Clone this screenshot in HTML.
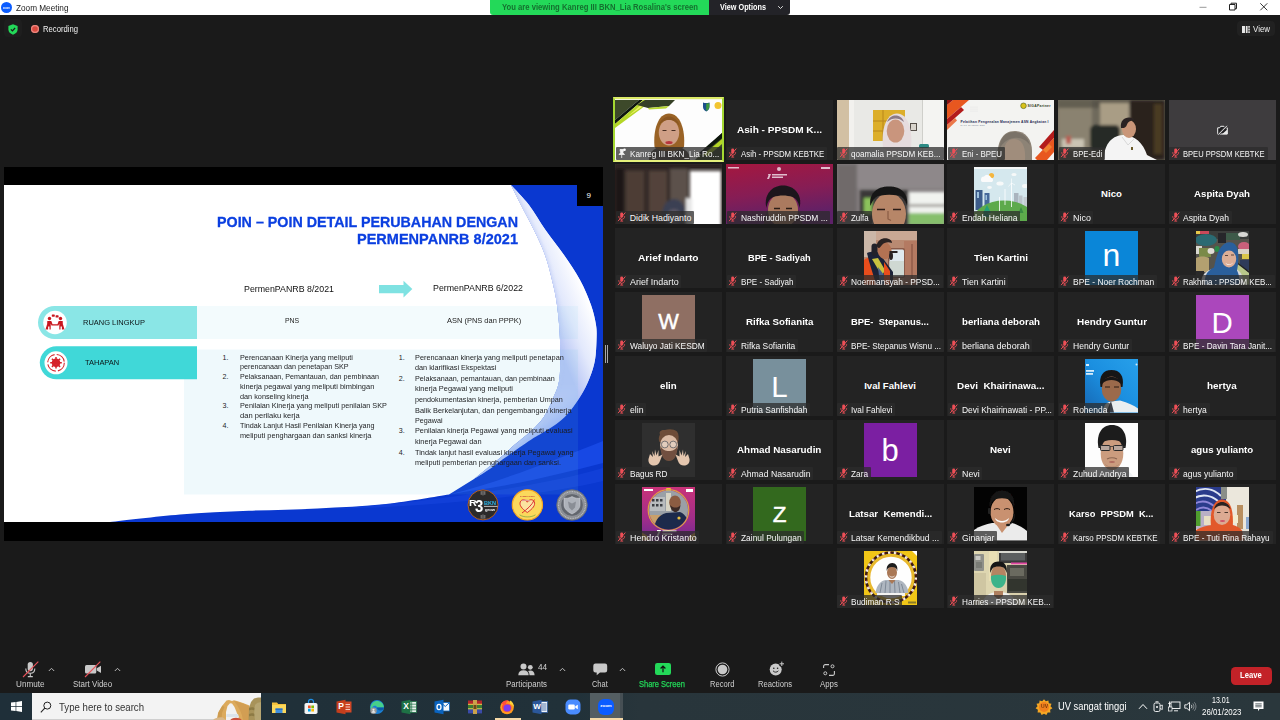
<!DOCTYPE html>
<html lang="id"><head><meta charset="utf-8"><title>Zoom Meeting</title>
<style>
html,body{margin:0;padding:0}
body{width:1280px;height:720px;overflow:hidden;background:#1a1a1a;position:relative;font-family:"Liberation Sans",sans-serif;color:#fff}
.t{position:absolute;white-space:pre;display:block;transform-origin:0 50%}
.a{position:absolute}
.tile{position:absolute;width:107px;height:59.6px;background:#232323;overflow:hidden}
.lb{position:absolute;left:.5px;top:46.4px;height:13.2px;background:rgba(43,43,43,.74);border-radius:1px}
.av{position:absolute;left:27px;top:3px;width:53px;height:53.5px;overflow:hidden}
svg{position:absolute;display:block;overflow:visible}
</style></head><body>
<div class="a" style="left:0;top:0;width:1280px;height:15px;background:#fff"></div><div class="a" style="left:1px;top:2px;width:11px;height:11px;border-radius:50%;background:#0b5cff"></div><span class="t" style="left:3.2px;top:5.6px;font-size:3.2px;line-height:4px;color:#fff;font-weight:700;transform:scaleX(0.817);">zoom</span><span class="t" style="left:15.5px;top:1.5px;font-size:9.4px;line-height:12px;color:#222;transform:scaleX(0.876);">Zoom Meeting</span><svg style="left:1196px;top:0" width="80" height="15" viewBox="0 0 80 15"><path d="M3.5 7.3h7" stroke="#999" stroke-width="1"/><path d="M33.5 4.5h5.5v5.5h-5.5z M35 4.5v-1.3h5.5v5.5h-1.5" fill="none" stroke="#222" stroke-width="1"/><path d="M64.3 3.3l7 7M71.3 3.3l-7 7" stroke="#222" stroke-width="0.9"/></svg><div class="a" style="left:490px;top:0;width:219px;height:14.5px;background:#23d959;border-radius:0 0 0 3px"></div><div class="a" style="left:709px;top:0;width:81px;height:14.5px;background:#232328;border-radius:0 0 3px 0"></div><span class="t" style="left:502.0px;top:1.9px;font-size:8.6px;line-height:11px;color:#15702f;font-weight:700;transform:scaleX(0.892);">You are viewing Kanreg III BKN_Lia Rosalina&#x27;s screen</span><span class="t" style="left:720.0px;top:1.9px;font-size:8.6px;line-height:11px;color:#fff;font-weight:700;transform:scaleX(0.847);">View Options</span><svg style="left:777px;top:5px" width="7" height="5" viewBox="0 0 7 5"><path d="M1.2 1.2l2.3 2.3 2.3-2.3" fill="none" stroke="#ddd" stroke-width="1"/></svg><div class="a" style="left:4px;top:19px;width:18px;height:18px;border-radius:4px;background:#1e1e1e"></div><svg style="left:8.200px;top:23.600px" width="10" height="11" viewBox="0 0 10 11"><path d="M5 .3L9.6 1.9v3.6c0 2.5-1.900 4.300-4.600 5.200C2.300 9.800 .4 8 .4 5.500V1.900z" fill="#23d959"/><path d="M2.900 5.400l1.500 1.500 2.700-2.900" fill="none" stroke="#1a1a1a" stroke-width="1.200"/></svg><div class="a" style="left:30.5px;top:25px;width:8px;height:8px;border-radius:50%;background:#d9493f;box-shadow:inset 0 0 0 1.2px #e98a82"></div><span class="t" style="left:42.5px;top:23.5px;font-size:8.6px;line-height:11px;color:#f2f2f2;transform:scaleX(0.893);">Recording</span><div class="a" style="left:1237px;top:21px;width:38px;height:15px;border-radius:4px;background:#212121"></div><svg style="left:1242px;top:25.500px" width="8" height="7" viewBox="0 0 8 7"><path d="M0 0h3v7h-3zM3.8 0h1.800v7h-1.800zM6.300 0h1.500v1.800h-1.500zM6.300 2.600h1.500v1.800h-1.500zM6.300 5.200h1.500v1.800h-1.500z" fill="#e6e6e6"/></svg><span class="t" style="left:1253.0px;top:23.5px;font-size:8.6px;line-height:11px;color:#eee;transform:scaleX(0.920);">View</span><div class="a" style="left:4px;top:167px;width:599px;height:374px;background:#000"></div><div class="a" style="left:4px;top:185px;width:599px;height:337px;background:#fff;overflow:hidden"><svg style="left:0;top:0" width="599" height="337" viewBox="4 185 599 337">
<defs>
<linearGradient id="cg" gradientUnits="userSpaceOnUse" x1="548" y1="320" x2="597" y2="300"><stop offset="0" stop-color="#b7c5f5"/><stop offset=".4" stop-color="#e3e9fc"/><stop offset=".85" stop-color="#ffffff"/></linearGradient>
<linearGradient id="cg2" gradientUnits="userSpaceOnUse" x1="516" y1="432" x2="546" y2="470"><stop offset="0" stop-color="#c9d6fa"/><stop offset=".55" stop-color="#8ea9f3"/><stop offset="1" stop-color="#3e66e8"/></linearGradient>
<linearGradient id="fade" gradientUnits="userSpaceOnUse" x1="0" y1="385" x2="0" y2="435"><stop offset="0" stop-color="#fff" stop-opacity="1"/><stop offset="1" stop-color="#fff" stop-opacity="0"/></linearGradient>
<mask id="mk" maskUnits="userSpaceOnUse" x="0" y="180" width="610" height="345"><rect x="0" y="180" width="610" height="345" fill="url(#fade)"/></mask>
<clipPath id="crc"><path d="M511.0 185.0C514.0 188.3 523.2 197.5 529.0 205.0C534.8 212.5 539.7 221.7 545.5 230.0C551.3 238.3 558.2 246.7 564.0 255.0C569.8 263.3 575.5 271.7 580.0 280.0C584.5 288.3 588.3 297.5 591.0 305.0C593.7 312.5 595.1 319.2 596.0 325.0C596.9 330.8 596.7 334.2 596.5 340.0C596.3 345.8 596.1 353.7 595.0 360.0C593.9 366.3 592.1 371.8 589.6 378.0C587.1 384.2 584.1 390.6 580.0 397.0C575.9 403.4 570.4 411.2 565.0 416.7C559.6 422.2 553.3 426.0 547.6 429.8C541.9 433.6 538.1 435.1 531.0 439.7C523.9 444.3 511.5 453.1 505.0 457.7C498.5 462.3 497.2 463.9 492.0 467.5C486.8 471.1 477.0 477.1 474.0 479.0C478.1 475.7 491.6 465.0 498.4 459.3C505.2 453.6 509.4 449.3 514.8 444.6C520.2 439.9 526.1 435.6 531.0 431.0C535.9 426.4 540.2 422.4 544.0 416.7C547.8 411.0 551.0 403.4 553.6 397.0C556.2 390.6 558.4 387.5 559.5 378.0C560.6 368.5 560.4 352.2 560.0 340.0C559.6 327.8 558.3 315.0 557.0 305.0C555.7 295.0 554.0 288.3 552.0 280.0C550.0 271.7 548.0 263.3 545.0 255.0C542.0 246.7 538.0 238.3 534.0 230.0C530.0 221.7 524.8 212.5 521.0 205.0C517.2 197.5 512.7 188.3 511.0 185.0Z"/></clipPath>
</defs>
<!-- deep blue base -->
<path d="M511.0 185.0C512.7 188.3 517.2 197.5 521.0 205.0C524.8 212.5 530.0 221.7 534.0 230.0C538.0 238.3 542.0 246.7 545.0 255.0C548.0 263.3 550.0 271.7 552.0 280.0C554.0 288.3 555.7 295.0 557.0 305.0C558.3 315.0 559.6 327.8 560.0 340.0C560.4 352.2 560.6 368.5 559.5 378.0C558.4 387.5 556.2 390.6 553.6 397.0C551.0 403.4 547.8 411.0 544.0 416.7C540.2 422.4 535.9 426.4 531.0 431.0C526.1 435.6 520.2 439.9 514.8 444.6C509.4 449.3 505.2 453.6 498.4 459.3C491.6 465.0 478.1 475.7 474.0 479.0L449.0 494.6C438.5 496.2 407.9 501.7 386.0 504.0C364.1 506.3 340.4 507.3 317.5 508.4C294.6 509.5 271.6 509.8 248.7 510.8C225.8 511.8 203.1 512.6 180.0 514.5C156.9 516.4 121.7 520.8 110.0 522.0L603 522L603 185Z" fill="#0a38d0"/>
<!-- medium blue bands -->
<path d="M449 494.6 C500 482 560 458 603 441 L603 463 C560 474 520 484 470 491 Z" fill="#1748e4"/>
<path d="M330 509 C420 503 540 487 603 468 L603 481 C540 496 430 507 330 509 Z" fill="#1443dc" opacity=".7"/>
<!-- crescent: lower lens layer then upper white layer fading out -->
<path d="M511.0 185.0C514.0 188.3 523.2 197.5 529.0 205.0C534.8 212.5 539.7 221.7 545.5 230.0C551.3 238.3 558.2 246.7 564.0 255.0C569.8 263.3 575.5 271.7 580.0 280.0C584.5 288.3 588.3 297.5 591.0 305.0C593.7 312.5 595.1 319.2 596.0 325.0C596.9 330.8 596.7 334.2 596.5 340.0C596.3 345.8 596.1 353.7 595.0 360.0C593.9 366.3 592.1 371.8 589.6 378.0C587.1 384.2 584.1 390.6 580.0 397.0C575.9 403.4 570.4 411.2 565.0 416.7C559.6 422.2 553.3 426.0 547.6 429.8C541.9 433.6 538.1 435.1 531.0 439.7C523.9 444.3 511.5 453.1 505.0 457.7C498.5 462.3 497.2 463.9 492.0 467.5C486.8 471.1 477.0 477.1 474.0 479.0C478.1 475.7 491.6 465.0 498.4 459.3C505.2 453.6 509.4 449.3 514.8 444.6C520.2 439.9 526.1 435.6 531.0 431.0C535.9 426.4 540.2 422.4 544.0 416.7C547.8 411.0 551.0 403.4 553.6 397.0C556.2 390.6 558.4 387.5 559.5 378.0C560.6 368.5 560.4 352.2 560.0 340.0C559.6 327.8 558.3 315.0 557.0 305.0C555.7 295.0 554.0 288.3 552.0 280.0C550.0 271.7 548.0 263.3 545.0 255.0C542.0 246.7 538.0 238.3 534.0 230.0C530.0 221.7 524.8 212.5 521.0 205.0C517.2 197.5 512.7 188.3 511.0 185.0Z" fill="url(#cg2)"/>
<g mask="url(#mk)"><path d="M511.0 185.0C514.0 188.3 523.2 197.5 529.0 205.0C534.8 212.5 539.7 221.7 545.5 230.0C551.3 238.3 558.2 246.7 564.0 255.0C569.8 263.3 575.5 271.7 580.0 280.0C584.5 288.3 588.3 297.5 591.0 305.0C593.7 312.5 595.1 319.2 596.0 325.0C596.9 330.8 596.7 334.2 596.5 340.0C596.3 345.8 596.1 353.7 595.0 360.0C593.9 366.3 592.1 371.8 589.6 378.0C587.1 384.2 584.1 390.6 580.0 397.0C575.9 403.4 570.4 411.2 565.0 416.7C559.6 422.2 553.3 426.0 547.6 429.8C541.9 433.6 538.1 435.1 531.0 439.7C523.9 444.3 511.5 453.1 505.0 457.7C498.5 462.3 497.2 463.9 492.0 467.5C486.8 471.1 477.0 477.1 474.0 479.0C478.1 475.7 491.6 465.0 498.4 459.3C505.2 453.6 509.4 449.3 514.8 444.6C520.2 439.9 526.1 435.6 531.0 431.0C535.9 426.4 540.2 422.4 544.0 416.7C547.8 411.0 551.0 403.4 553.6 397.0C556.2 390.6 558.4 387.5 559.5 378.0C560.6 368.5 560.4 352.2 560.0 340.0C559.6 327.8 558.3 315.0 557.0 305.0C555.7 295.0 554.0 288.3 552.0 280.0C550.0 271.7 548.0 263.3 545.0 255.0C542.0 246.7 538.0 238.3 534.0 230.0C530.0 221.7 524.8 212.5 521.0 205.0C517.2 197.5 512.7 188.3 511.0 185.0Z" fill="url(#cg)"/></g>
<path d="M511.0 185.0C512.7 188.3 517.2 197.5 521.0 205.0C524.8 212.5 530.0 221.7 534.0 230.0C538.0 238.3 542.0 246.7 545.0 255.0C548.0 263.3 550.0 271.7 552.0 280.0C554.0 288.3 555.7 295.0 557.0 305.0C558.3 315.0 559.6 327.8 560.0 340.0C560.4 352.2 560.6 368.5 559.5 378.0C558.4 387.5 556.2 390.6 553.6 397.0C551.0 403.4 547.8 411.0 544.0 416.7C540.2 422.4 535.9 426.4 531.0 431.0C526.1 435.6 520.2 439.9 514.8 444.6C509.4 449.3 505.2 453.6 498.4 459.3C491.6 465.0 478.1 475.7 474.0 479.0" fill="none" stroke="#b9c7f5" stroke-width="3" opacity=".55" filter="url(#b2)" clip-path="url(#crc)"/>
</svg><svg style="left:0;top:0" width="599" height="337" viewBox="4 185 599 337">
<!-- table backgrounds -->
<rect x="197" y="306" width="381" height="33" fill="rgb(100,200,230)" fill-opacity=".075"/>
<rect x="184" y="349.500" width="394" height="145" fill="rgb(100,200,230)" fill-opacity=".105"/>
<!-- pills -->
<path d="M197 306H54.500a16.500 16.500 0 0 0 0 33H197z" fill="#8ae6e6"/>
<path d="M197 346.300H56.300a16.500 16.500 0 0 0 0 33H197z" fill="#40d8d8"/>
<circle cx="55" cy="322.500" r="11.800" fill="#fff"/>
<circle cx="56" cy="362.800" r="11.500" fill="#fff"/>
<!-- icon 1: meeting -->
<g fill="#c8161d"><circle cx="49.500" cy="318.500" r="1.700"/><circle cx="60.500" cy="318.500" r="1.700"/><path d="M47.300 321h4l1.200 3.300h2.500v1.300h-3.500l-.8-2v6h-1.200v-3h-1.400v3h-1.200z"/><path d="M62.700 321h-4l-1.200 3.300h-2.500v1.300h3.500l.8-2v6h1.200v-3h1.400v3h1.200z"/><rect x="51.800" y="314.500" width="3" height="2.200" rx=".6"/><rect x="55.600" y="315.300" width="3" height="2.200" rx=".6"/><path d="M45.500 329.600l1.500-5h1.200l-1.500 5zM64.500 329.600l-1.500-5h-1.200l1.500 5z"/></g>
<!-- icon 2: cycle gear -->
<g fill="none" stroke="#d5222a"><circle cx="56" cy="362.800" r="8.300" stroke-width="1.100" stroke-dasharray="11 2.200"/><circle cx="56" cy="362.800" r="3.100" stroke-width="2.400"/><path d="M56 357v11.600M50.200 362.800h11.600M51.900 358.700l8.200 8.200M60.100 358.700l-8.200 8.200" stroke-width="1.500"/></g>
<!-- arrow -->
<path d="M379 285h24.500v-4.300l8.800 8.400-8.800 8.400v-4.300H379z" fill="#7fe2e2"/>
<!-- page number box -->
<rect x="577" y="185" width="26" height="21" fill="#000"/>
<!-- logos -->
<circle cx="483" cy="504.900" r="15" fill="#2b2a2a" stroke="#c0651f" stroke-width=".9"/>
<path d="M484 506.400h13.500" stroke="#fff" stroke-width=".7"/>
<path d="M481.200 491.200v3.600M483 491v4.400M484.800 491.200v3.600M481.200 515v3.600M483 514.500v4.400M484.800 515v3.600" stroke="#c9c9c9" stroke-width=".6"/>
<circle cx="527.400" cy="504.900" r="15.100" fill="#fbd85c" stroke="#f5a623" stroke-width="1.200"/>
<path d="M527.300 512.500c-5.500-3.800-8.300-7.300-7-10.600 1.300-3 5.300-2.900 7 .3 1.700-3.200 5.700-3.300 7-.3 1.300 3.300-1.500 6.800-7 10.600z" fill="#fbe3a0" stroke="#d8232a" stroke-width=".9"/>
<path d="M534.500 499.500c-2.500 6-8 10-12.500 13.500" stroke="#d8232a" stroke-width=".9" fill="none"/>
<path d="M522 500.800c2-.8 5-.8 8 0" stroke="#e39a9a" stroke-width="1.200" fill="none"/>
<path d="M519.500 514.800c4 2.800 12 2.800 16 0" stroke="#5a9a3a" stroke-width=".6" fill="none"/>
<circle cx="572" cy="505" r="15.300" fill="#8b8e94" stroke="#6a6d74" stroke-width=".8"/>
<circle cx="572" cy="505" r="13.400" fill="none" stroke="#d5d7db" stroke-width="1.100" stroke-dasharray=".9 .8" opacity=".7"/>
<circle cx="572" cy="505" r="11.300" fill="#62666e" stroke="#a9acb2" stroke-width=".5"/>
<path d="M564 498c2.600.7 5.300.2 8-1.500 2.700 1.700 5.400 2.200 8 1.500v6.500c0 4.300-3.300 7.200-8 9.500-4.700-2.300-8-5.200-8-9.500z" fill="#aeb2ba" stroke="#d9dbe0" stroke-width=".5"/>
<path d="M568 501.500l4 2 4-2-1 6-3 3-3-3z" fill="#8a8e96"/>
</svg></div><span class="t" style="left:217.0px;top:212.3px;font-size:15px;line-height:20px;color:#0b3fe0;font-weight:700;transform:scaleX(0.952);-webkit-text-stroke:.3px #0b3fe0;">POIN – POIN DETAIL PERUBAHAN DENGAN</span><span class="t" style="left:357.0px;top:228.6px;font-size:15px;line-height:20px;color:#0b3fe0;font-weight:700;transform:scaleX(0.967);-webkit-text-stroke:.3px #0b3fe0;">PERMENPANRB 8/2021</span><span class="t" style="left:586.6px;top:191.0px;font-size:8px;line-height:10px;color:#fff;">9</span><span class="t" style="left:243.5px;top:283.3px;font-size:9px;line-height:12px;color:#111;transform:scaleX(0.979);">PermenPANRB 8/2021</span><span class="t" style="left:432.5px;top:282.3px;font-size:9px;line-height:12px;color:#111;transform:scaleX(0.979);">PermenPANRB 6/2022</span><span class="t" style="left:83.4px;top:317.5px;font-size:7.4px;line-height:10px;color:#0c1416;transform:scaleX(1.011);">RUANG LINGKUP</span><span class="t" style="left:85.0px;top:357.8px;font-size:7.4px;line-height:10px;color:#0c1416;transform:scaleX(1.011);">TAHAPAN</span><span class="t" style="left:285.3px;top:315.9px;font-size:7.4px;line-height:10px;color:#222;transform:scaleX(0.934);">PNS</span><span class="t" style="left:447.0px;top:316.2px;font-size:7.4px;line-height:10px;color:#222;transform:scaleX(1.010);">ASN (PNS dan PPPK)</span><span class="t" style="left:239.7px;top:353.6px;font-size:7.1px;line-height:9px;color:#1c1d1f;transform:scaleX(1.026);">Perencanaan Kinerja yang meliputi</span><span class="t" style="left:222.6px;top:353.6px;font-size:7.1px;line-height:9px;color:#1c1d1f;">1.</span><span class="t" style="left:239.7px;top:363.4px;font-size:7.1px;line-height:9px;color:#1c1d1f;transform:scaleX(1.016);">perencanaan dan penetapan SKP</span><span class="t" style="left:239.7px;top:373.2px;font-size:7.1px;line-height:9px;color:#1c1d1f;transform:scaleX(1.006);">Pelaksanaan, Pemantauan, dan pembinaan</span><span class="t" style="left:222.6px;top:373.2px;font-size:7.1px;line-height:9px;color:#1c1d1f;">2.</span><span class="t" style="left:239.7px;top:383.1px;font-size:7.1px;line-height:9px;color:#1c1d1f;transform:scaleX(1.051);">kinerja pegawai yang meliputi bimbingan</span><span class="t" style="left:239.7px;top:392.7px;font-size:7.1px;line-height:9px;color:#1c1d1f;transform:scaleX(1.028);">dan konseling kinerja</span><span class="t" style="left:239.7px;top:402.3px;font-size:7.1px;line-height:9px;color:#1c1d1f;transform:scaleX(1.023);">Penilaian Kinerja yang meliputi penilaian SKP</span><span class="t" style="left:222.6px;top:402.3px;font-size:7.1px;line-height:9px;color:#1c1d1f;">3.</span><span class="t" style="left:239.7px;top:412.0px;font-size:7.1px;line-height:9px;color:#1c1d1f;transform:scaleX(1.066);">dan perilaku kerja</span><span class="t" style="left:239.7px;top:421.7px;font-size:7.1px;line-height:9px;color:#1c1d1f;transform:scaleX(1.015);">Tindak Lanjut Hasil Penilaian Kinerja yang</span><span class="t" style="left:222.6px;top:421.7px;font-size:7.1px;line-height:9px;color:#1c1d1f;">4.</span><span class="t" style="left:239.7px;top:431.5px;font-size:7.1px;line-height:9px;color:#1c1d1f;transform:scaleX(1.034);">meliputi penghargaan dan sanksi kinerja</span><span class="t" style="left:415.3px;top:353.6px;font-size:7.1px;line-height:9px;color:#1c1d1f;transform:scaleX(1.031);">Perencanaan kinerja yang meliputi penetapan</span><span class="t" style="left:398.8px;top:353.6px;font-size:7.1px;line-height:9px;color:#1c1d1f;">1.</span><span class="t" style="left:415.3px;top:364.3px;font-size:7.1px;line-height:9px;color:#1c1d1f;transform:scaleX(1.026);">dan klarifikasi Ekspektasi</span><span class="t" style="left:415.3px;top:374.6px;font-size:7.1px;line-height:9px;color:#1c1d1f;transform:scaleX(1.018);">Pelaksanaan, pemantauan, dan pembinaan</span><span class="t" style="left:398.8px;top:374.6px;font-size:7.1px;line-height:9px;color:#1c1d1f;">2.</span><span class="t" style="left:415.3px;top:385.3px;font-size:7.1px;line-height:9px;color:#1c1d1f;transform:scaleX(1.043);">kinerja Pegawai yang meliputi</span><span class="t" style="left:415.3px;top:396.0px;font-size:7.1px;line-height:9px;color:#1c1d1f;transform:scaleX(1.019);">pendokumentasian kinerja, pemberian Umpan</span><span class="t" style="left:415.3px;top:406.7px;font-size:7.1px;line-height:9px;color:#1c1d1f;transform:scaleX(1.039);">Balik Berkelanjutan, dan pengembangan kinerja</span><span class="t" style="left:415.3px;top:417.0px;font-size:7.1px;line-height:9px;color:#1c1d1f;transform:scaleX(1.014);">Pegawai</span><span class="t" style="left:415.3px;top:427.1px;font-size:7.1px;line-height:9px;color:#1c1d1f;transform:scaleX(1.030);">Penilaian kinerja Pegawai yang meliputi evaluasi</span><span class="t" style="left:398.8px;top:427.1px;font-size:7.1px;line-height:9px;color:#1c1d1f;">3.</span><span class="t" style="left:415.3px;top:437.8px;font-size:7.1px;line-height:9px;color:#1c1d1f;transform:scaleX(1.041);">kinerja Pegawai dan</span><span class="t" style="left:415.3px;top:448.5px;font-size:7.1px;line-height:9px;color:#1c1d1f;transform:scaleX(1.030);">Tindak lanjut hasil evaluasi kinerja Pegawai yang</span><span class="t" style="left:398.8px;top:448.5px;font-size:7.1px;line-height:9px;color:#1c1d1f;">4.</span><span class="t" style="left:415.3px;top:459.2px;font-size:7.1px;line-height:9px;color:#1c1d1f;transform:scaleX(1.031);">meliputi pemberian penghargaan dan sanksi.</span><span class="t" style="left:468.9px;top:497.9px;font-size:8.6px;line-height:11px;color:#fff;font-weight:700;transform:scaleX(1.250);">R</span><span class="t" style="left:475.3px;top:494.7px;font-size:17.4px;line-height:23px;color:#fff;font-weight:700;transform:scaleX(0.858);">3</span><span class="t" style="left:484.0px;top:498.6px;font-size:6.1px;line-height:8px;color:#2bb5e8;font-weight:700;transform:scaleX(0.909);">BKN</span><span class="t" style="left:485.2px;top:507.2px;font-size:4px;line-height:5px;color:#fff;font-weight:700;transform:scaleX(1.056);">grow</span><span class="t" style="left:520.0px;top:495.2px;font-size:1.9px;line-height:2px;color:#b33;font-weight:700;transform:scaleX(0.972);">KANREG III BKN</span><div class="a" style="left:604.800px;top:345px;width:1.200px;height:18px;background:#a9a9a9"></div><div class="a" style="left:606.800px;top:345px;width:1.200px;height:18px;background:#a9a9a9"></div><svg width="0" height="0" style="left:0;top:0"><defs><filter id="b1" x="-10%" y="-10%" width="120%" height="120%"><feGaussianBlur stdDeviation=".7"/></filter><filter id="b2" x="-20%" y="-20%" width="140%" height="140%"><feGaussianBlur stdDeviation="1.600"/></filter><filter id="b3" x="-30%" y="-30%" width="160%" height="160%"><feGaussianBlur stdDeviation="3"/></filter></defs></svg><div class="a" style="left:612.900px;top:97.200px;width:106.900px;height:60.400px;border:2.500px solid;background:#f4f6e0;border-color:#dcea68 #a4d832 #e6f07c #a4d832"></div><div class="tile" style="left:615px;top:100.3px;background:#fff;"><svg style="left:0;top:0" width="107" height="60" viewBox="0 0 107 60"><rect width="107" height="60" fill="#fdfdfd"/>
<g filter="url(#b1)">
<path d="M0 0H24L0 20z" fill="#3d4a2a"/><path d="M24 0h4L0 24v-4z" fill="#10140c"/><path d="M28 0h10L0 28v-4z" fill="#b4d628"/><path d="M30 1.500L37 0 12 17z" fill="#eef06a"/>
<path d="M22 5L30 0H60L54 6 33 8z" fill="#343f26"/><path d="M33 8l21-2-3 2.500-17 1z" fill="#b8d830"/>
<path d="M107 33L80 60h27z" fill="#3d4a2a"/><path d="M107 33L84 53l3 1.500L107 38z" fill="#10140c"/><path d="M107 39L88 55l5 1L107 44z" fill="#b4d628"/>
<path d="M34 60c0-9 6-14 20-14s21 5 21 14z" fill="#5c524a"/>
<path d="M39.500 47C38 30 43 13.500 54 13.500S70.500 29 69 47c-3 3-9 4-15 4s-12-1-14.500-4z" fill="#9a6426"/>
<ellipse cx="54" cy="32.500" rx="10.200" ry="13" fill="#cf9f86"/>
<path d="M43.500 26c2-7 7-9.500 10.500-9.500s9 2.500 10.500 9.500c-3-4.500-6.500-6-10.500-6s-7.500 1.500-10.500 6z" fill="#8a5620"/>
<ellipse cx="54" cy="42.500" rx="3.600" ry="1.500" fill="#b8353c"/>
<path d="M47.500 30.500h4M56.500 30.500h4" stroke="#4a2e22" stroke-width="1"/>
</g>
<path d="M88 2.500c2 .8 4 .8 6.500 0v4.500c0 2.200-1.600 3.600-3.200 4.500C89.600 10.600 88 9.200 88 7z" fill="#1d4f8c"/><path d="M91.200 3.500v7.500c1.600-.9 3.200-2.300 3.200-4.500V3c-1 .4-2.100.5-3.200.5z" fill="#3c9a3c"/>
<circle cx="103" cy="5.500" r="3.500" fill="#f2c531"/></svg><div class="lb" style="width:106.3px"><svg style="left:1.5px;top:1.2px" width="10" height="11" viewBox="0 0 10 11"><path d="M3 1.500h3.500l-.6 3.200 1.600 1.800H2l1.600-1.800zM4.700 6.500v3.500" fill="#f2f2f2" stroke="#f2f2f2" stroke-width=".8"/><circle cx="7.500" cy="1.800" r="1.300" fill="#fff"/></svg></div></div><span class="t" style="left:629.7px;top:148.5px;font-size:8.8px;line-height:11px;color:#f6f6f6;transform:scaleX(0.927);">Kanreg III BKN_Lia Ro...</span><div class="tile" style="left:726px;top:100.3px;"><div class="lb" style="width:100.3px"><svg style="left:1.5px;top:1.8px" width="9.400" height="9.800" viewBox="0 0 9 10"><rect x="3" y=".6" width="3" height="5.2" rx="1.500" fill="#ee4f57"/><path d="M1.500 4.300c0 2 1.300 3.100 3 3.100s3-1.100 3-3.100M4.500 7.400v1.800M3 9.300h3" fill="none" stroke="#ee4f57" stroke-width=".9"/><path d="M.8 9.300L8.200 .6" stroke="#ee4f57" stroke-width="1"/></svg></div></div><span class="t" style="left:740.7px;top:148.5px;font-size:8.8px;line-height:11px;color:#f6f6f6;transform:scaleX(0.892);">Asih - PPSDM KEBTKE</span><span class="t" style="left:737.0px;top:124.4px;font-size:9.6px;line-height:12px;color:#fff;font-weight:700;transform:scaleX(1.049);">Asih - PPSDM K...</span><div class="tile" style="left:836.6px;top:100.3px;"><svg style="left:0;top:0" width="107" height="60" viewBox="0 0 107 60"><rect width="107" height="60" fill="#e9e9e6"/>
<g filter="url(#b1)">
<rect width="12" height="60" fill="#d2c0a3"/><rect x="12" width="5" height="60" fill="#f2f1ee"/>
<rect x="86" width="21" height="60" fill="#f4f4f2"/><rect x="85" width="1" height="60" fill="#cfcfcb"/>
<rect x="36" y="10" width="32" height="31" fill="#dcae2c"/><path d="M46 10v31M36 21h32M36 31h10" stroke="#b8861c" stroke-width="1"/>
<rect x="73" y="23" width="7" height="8" fill="#55504a"/><rect x="74" y="24" width="5" height="6" fill="#d8d4cc"/>
<path d="M38 60c1-9 7-13 21-13s20 5 22 13z" fill="#efecec"/>
<path d="M46 48C44 30 49 13.500 60 13.500S76 30 74 48c-4 3-9 4-14 4s-10-1-14-4z" fill="#e6dcde"/>
<ellipse cx="58.500" cy="31" rx="8.800" ry="11.500" fill="#c9957d"/>
<path d="M50 22c2-5 5.500-6.500 8.500-6.500s7 1.500 8.500 6.500c-3-2.500-5.500-3.500-8.500-3.500s-5.500 1-8.500 3.500z" fill="#8c7a86"/>
<rect x="82" y="44" width="10" height="4" rx="1.500" fill="#2f8c86"/>
</g></svg><div class="lb" style="width:106.5px"><svg style="left:1.5px;top:1.8px" width="9.400" height="9.800" viewBox="0 0 9 10"><rect x="3" y=".6" width="3" height="5.2" rx="1.500" fill="#ee4f57"/><path d="M1.500 4.300c0 2 1.300 3.100 3 3.100s3-1.100 3-3.100M4.500 7.400v1.800M3 9.300h3" fill="none" stroke="#ee4f57" stroke-width=".9"/><path d="M.8 9.300L8.200 .6" stroke="#ee4f57" stroke-width="1"/></svg></div></div><span class="t" style="left:851.3px;top:148.5px;font-size:8.8px;line-height:11px;color:#f6f6f6;transform:scaleX(0.924);">qoamalia PPSDM KEB...</span><div class="tile" style="left:947px;top:100.3px;"><svg style="left:0;top:0" width="107" height="60" viewBox="0 0 107 60"><rect width="107" height="60" fill="#f3f3f1"/>
<path d="M6 0h16L0 19V5z" fill="#e8571f"/><path d="M0 0h6L0 5z" fill="#8c1414"/><path d="M0 19L14 7l3 3L0 25z" fill="#b31b1b"/><path d="M0 25l8-7 2 2.500L0 30z" fill="#e8571f" opacity=".8"/>
<path d="M107 29L83 60h24z" fill="#f3f3f1"/><path d="M107 30L92 47l4 3 11-12z" fill="#b31b1b"/><path d="M107 38L88 58l2 2h10l7-8z" fill="#e8571f"/><path d="M96 50l6-6 3 3-6 6z" fill="#f08030"/>
<g fill="#cfcfd2"><circle cx="24" cy="7" r=".4"/><circle cx="26" cy="7" r=".4"/><circle cx="28" cy="7" r=".4"/><circle cx="30" cy="7" r=".4"/><circle cx="24" cy="9" r=".4"/><circle cx="26" cy="9" r=".4"/><circle cx="28" cy="9" r=".4"/><circle cx="30" cy="9" r=".4"/><circle cx="24" cy="11" r=".4"/><circle cx="26" cy="11" r=".4"/><circle cx="28" cy="11" r=".4"/><circle cx="30" cy="11" r=".4"/></g>
<circle cx="76.500" cy="5.800" r="2.800" fill="#d9c21a" stroke="#4a5a1a" stroke-width=".6"/>
<text x="80.500" y="7" font-family="Liberation Sans, sans-serif" font-size="3.400" font-weight="700" fill="#2d3a1a" textLength="23">SIGAPartner</text>
<text x="13.500" y="22.500" font-family="Liberation Sans, sans-serif" font-size="3.300" font-weight="700" fill="#1c2752" textLength="88">Pelatihan Pengenalan Manajemen ASN Angkatan I</text>
<text x="13.500" y="26.300" font-family="Liberation Sans, sans-serif" font-size="1.800" fill="#6a7088" textLength="24">24 s.d. 26 Januari 2023</text>
<g filter="url(#b1)"><path d="M50 60c0-16 4-29 18-29 11 0 17 9 17 20v9z" fill="#8d8376"/><path d="M57 60c-2-12 2-21 10-21s12 8 11 21z" fill="#a08d7c"/><path d="M52 50c1-12 6-18 15-18 8 0 14 5 16 13-4-5-9-8-16-7-7 1-12 5-15 12z" fill="#7a7268"/></g></svg><div class="lb" style="width:57.0px"><svg style="left:1.5px;top:1.8px" width="9.400" height="9.800" viewBox="0 0 9 10"><rect x="3" y=".6" width="3" height="5.2" rx="1.500" fill="#ee4f57"/><path d="M1.500 4.300c0 2 1.300 3.100 3 3.100s3-1.100 3-3.100M4.500 7.400v1.800M3 9.300h3" fill="none" stroke="#ee4f57" stroke-width=".9"/><path d="M.8 9.300L8.200 .6" stroke="#ee4f57" stroke-width="1"/></svg></div></div><span class="t" style="left:961.7px;top:148.5px;font-size:8.8px;line-height:11px;color:#f6f6f6;transform:scaleX(0.899);">Eni - BPEU</span><div class="tile" style="left:1058px;top:100.3px;"><svg style="left:0;top:0" width="107" height="60" viewBox="0 0 107 60"><rect width="107" height="60" fill="#6f6a5c"/>
<g filter="url(#b2)">
<rect width="34" height="60" fill="#8a8270"/><rect x="0" y="0" width="107" height="8" fill="#4a463c" opacity=".6"/>
<rect x="42" y="3" width="29" height="40" fill="#a99d85"/>
<rect x="72" y="0" width="35" height="60" fill="#2b221a"/><rect x="96" y="4" width="8" height="50" fill="#4a3a24"/>
<rect x="32" y="25" width="30" height="26" rx="5" fill="#252a28"/>
<rect x="4" y="39" width="22" height="9" fill="#cbc4b4"/><rect x="8" y="36" width="5" height="8" fill="#b85a50"/>
<rect x="0" y="50" width="50" height="10" fill="#5c574c"/>
</g>
<g filter="url(#b1)">
<path d="M46 60c0-14 6-24 19-25 12 0 20 8 24 20l10 5z" fill="#f4f4f4"/>
<ellipse cx="71" cy="29" rx="7" ry="9" fill="#c99678"/>
<path d="M63 28c-1-7 3-10.500 8-10.500 3 0 5 1 6 3-4-.5-7 1-8 4-1 3-3 4-6 3.500z" fill="#2a2420"/>
<path d="M64 37l6 8 7-7" fill="none" stroke="#d8d8d8" stroke-width="1"/>
<rect x="73" y="47" width="2" height="3" fill="#6a5a2a"/>
</g></svg><div class="lb" style="width:46.3px"><svg style="left:1.5px;top:1.8px" width="9.400" height="9.800" viewBox="0 0 9 10"><rect x="3" y=".6" width="3" height="5.2" rx="1.500" fill="#ee4f57"/><path d="M1.500 4.300c0 2 1.300 3.100 3 3.100s3-1.100 3-3.100M4.500 7.400v1.800M3 9.300h3" fill="none" stroke="#ee4f57" stroke-width=".9"/><path d="M.8 9.300L8.200 .6" stroke="#ee4f57" stroke-width="1"/></svg></div></div><span class="t" style="left:1072.7px;top:148.5px;font-size:8.8px;line-height:11px;color:#f6f6f6;transform:scaleX(0.881);">BPE-Edi</span><div class="tile" style="left:1168.7px;top:100.3px;background:#3e3c3e;"><svg style="left:48px;top:25px" width="11" height="10" viewBox="0 0 11 10"><path d="M.7 2.800h2l1-1.500h3.200l1 1.500h2.400v6.200H.7z" fill="#1d1d1f" stroke="#f2f2f2" stroke-width="1"/><path d="M5 9.300h5.300V4.500z" fill="#e8e8e8"/><path d="M1.300 9.600L10 .8" stroke="#3e3c3e" stroke-width="2.200"/><path d="M1.300 9.600L10 .8" stroke="#f2f2f2" stroke-width=".9"/></svg><div class="lb" style="width:98.6px"><svg style="left:1.5px;top:1.8px" width="9.400" height="9.800" viewBox="0 0 9 10"><rect x="3" y=".6" width="3" height="5.2" rx="1.500" fill="#ee4f57"/><path d="M1.500 4.300c0 2 1.300 3.100 3 3.100s3-1.100 3-3.100M4.500 7.400v1.800M3 9.300h3" fill="none" stroke="#ee4f57" stroke-width=".9"/><path d="M.8 9.300L8.200 .6" stroke="#ee4f57" stroke-width="1"/></svg></div></div><span class="t" style="left:1183.4px;top:148.5px;font-size:8.8px;line-height:11px;color:#f6f6f6;transform:scaleX(0.860);">BPEU PPSDM KEBTKE</span><div class="tile" style="left:615px;top:164.3px;"><svg style="left:0;top:0" width="107" height="60" viewBox="0 0 107 60"><rect width="107" height="60" fill="#342a27"/>
<g filter="url(#b2)">
<rect x="0" width="9" height="60" fill="#1d1817"/>
<rect x="11" y="7" width="18" height="48" fill="#4d3d35"/><rect x="34" y="7" width="18" height="48" fill="#52433a"/>
<rect x="55" y="0" width="18" height="60" fill="#5c514c"/><rect x="0" y="0" width="107" height="5" fill="#2a2220"/>
<rect x="75" y="7" width="31" height="56" fill="#ffffff"/><rect x="71" y="34" width="6" height="28" fill="#e6e6e6"/>
<ellipse cx="59" cy="49" rx="11.500" ry="14" fill="#3a4152"/><ellipse cx="59" cy="54" rx="7.500" ry="9" fill="#5c5866"/>
</g></svg><div class="lb" style="width:78.6px"><svg style="left:1.5px;top:1.8px" width="9.400" height="9.800" viewBox="0 0 9 10"><rect x="3" y=".6" width="3" height="5.2" rx="1.500" fill="#ee4f57"/><path d="M1.500 4.300c0 2 1.300 3.100 3 3.100s3-1.100 3-3.100M4.500 7.400v1.800M3 9.300h3" fill="none" stroke="#ee4f57" stroke-width=".9"/><path d="M.8 9.300L8.200 .6" stroke="#ee4f57" stroke-width="1"/></svg></div></div><span class="t" style="left:629.7px;top:212.5px;font-size:8.8px;line-height:11px;color:#f6f6f6;">Didik Hadiyanto</span><div class="tile" style="left:726px;top:164.3px;"><svg style="left:0;top:0" width="107" height="60" viewBox="0 0 107 60"><defs><linearGradient id="ng" x1="0" y1="0" x2=".25" y2="1"><stop offset="0" stop-color="#a5173f"/><stop offset=".55" stop-color="#861d55"/><stop offset="1" stop-color="#5d2168"/></linearGradient></defs>
<rect width="107" height="60" fill="url(#ng)"/>
<g fill="#f3e6ee" opacity=".8"><rect x="2" y="3" width="11" height="1.500"/><rect x="95" y="3" width="9" height="2"/><circle cx="53" cy="5" r="2"/><path d="M42 10l3 0-2 5h-2l1.500-3.500z"/><rect x="46" y="10" width="15" height="1.500"/><rect x="46" y="12.500" width="11" height="1.500"/></g>
<g filter="url(#b1)">
<path d="M38 60c0-9 4-16 8-18h22c4 2 8 9 8 18z" fill="#4a2a3a"/>
<ellipse cx="57" cy="46" rx="15" ry="17" fill="#ab7a5e"/>
<path d="M40.500 44c-3-13 5-22.500 16.500-22.500S77 31 73.500 44c-1-7-4-10-7-11-6-2-13-2-19 0-3 1-6 4-7 11z" fill="#1b191c"/>
<path d="M48 44.500h6M60 44.500h6" stroke="#2a1c18" stroke-width="1.300"/>
</g></svg><div class="lb" style="width:103.7px"><svg style="left:1.5px;top:1.8px" width="9.400" height="9.800" viewBox="0 0 9 10"><rect x="3" y=".6" width="3" height="5.2" rx="1.500" fill="#ee4f57"/><path d="M1.500 4.300c0 2 1.300 3.100 3 3.100s3-1.100 3-3.100M4.500 7.400v1.800M3 9.300h3" fill="none" stroke="#ee4f57" stroke-width=".9"/><path d="M.8 9.300L8.200 .6" stroke="#ee4f57" stroke-width="1"/></svg></div></div><span class="t" style="left:740.7px;top:212.5px;font-size:8.8px;line-height:11px;color:#f6f6f6;transform:scaleX(0.959);">Nashiruddin PPSDM ...</span><div class="tile" style="left:836.6px;top:164.3px;"><svg style="left:0;top:0" width="107" height="60" viewBox="0 0 107 60"><rect width="107" height="60" fill="#868182"/>
<g filter="url(#b2)">
<rect width="107" height="24" fill="#8e888a"/><rect x="0" y="0" width="20" height="60" fill="#6f6b6b"/>
<rect x="72" y="28" width="36" height="21" fill="#f1f3ef"/><rect x="72" y="49" width="36" height="12" fill="#86bf6c"/><rect x="66" y="40" width="42" height="3" fill="#a8a6a2"/>
<rect x="23" y="26" width="48" height="36" fill="#3b3837"/>
<rect x="27" y="34" width="8" height="16" fill="#8cc25c"/>
</g>
<g filter="url(#b1)">
<ellipse cx="52" cy="50" rx="17" ry="21" fill="#b78668"/>
<path d="M33.500 42c-2-12 6-19.500 18.500-19.500S72 30 70 42c-2-7-5-10-9-10.500-6-1-12-1-17 0-5 .5-8 3.500-10.500 10.500z" fill="#191717"/>
<path d="M40 45.500h8M56 45.500h8" stroke="#2a1c18" stroke-width="1.400"/>
<path d="M51 47v8l3 1.500" stroke="#8a5c44" stroke-width="1.200" fill="none"/>
</g></svg><div class="lb" style="width:34.7px"><svg style="left:1.5px;top:1.8px" width="9.400" height="9.800" viewBox="0 0 9 10"><rect x="3" y=".6" width="3" height="5.2" rx="1.500" fill="#ee4f57"/><path d="M1.500 4.300c0 2 1.300 3.100 3 3.100s3-1.100 3-3.100M4.500 7.400v1.800M3 9.300h3" fill="none" stroke="#ee4f57" stroke-width=".9"/><path d="M.8 9.300L8.200 .6" stroke="#ee4f57" stroke-width="1"/></svg></div></div><span class="t" style="left:851.3px;top:212.5px;font-size:8.8px;line-height:11px;color:#f6f6f6;transform:scaleX(0.905);">Zulfa</span><div class="tile" style="left:947px;top:164.3px;"><div class="av" style="background:#d5e8ee"><svg style="left:0;top:0" width="53" height="53.500" viewBox="0 0 53 53.500"><rect width="53" height="53.500" fill="#d5e8ee"/><rect width="53" height="2" fill="#f4f6f6"/>
<circle cx="17.500" cy="8.500" r="2.600" fill="#f4b63f"/><path d="M7 12.500a3 3 0 0 1 3-3 4 4 0 0 1 7 1 2.500 2.500 0 0 1 1 4.500H8.500A2 2 0 0 1 7 12.500z" fill="#fbfbfb"/>
<ellipse cx="26" cy="16.500" rx="3.600" ry="2" fill="#f7f9f9"/><ellipse cx="40" cy="7.500" rx="2.600" ry="1.500" fill="#f7f9f9"/><ellipse cx="51" cy="19" rx="3" ry="2" fill="#f7f9f9"/><ellipse cx="15.500" cy="20.500" rx="2.400" ry="1.400" fill="#f7f9f9"/>
<rect x="1.500" y="23" width="7" height="20" fill="#3c5c8a"/><rect x="3" y="25" width="2" height="6" fill="#9cc0dc"/><rect x="10.500" y="26" width="5" height="17" fill="#46699a"/><rect x="11.500" y="28" width="1.500" height="5" fill="#9cc0dc"/>
<rect x="40" y="26" width="4.500" height="14" fill="#aab4be"/><rect x="45" y="28.500" width="3.500" height="12" fill="#bcc4cc"/><rect x="49.500" y="30" width="3.500" height="12" fill="#c4ccd2"/>
<ellipse cx="30" cy="52" rx="30" ry="18.500" fill="#5daa4c"/><ellipse cx="8" cy="56" rx="18" ry="12" fill="#8fcf6a"/>
<path d="M37.500 16v24M31 22v16M25.500 30v14" stroke="#fff" stroke-width=".8"/><path d="M37.500 16l-3 3.500M37.500 16l3.500 2M37.500 16v-4.500" stroke="#fff" stroke-width=".6"/>
<path d="M13 38l-4 8h8zM12 43l-4 7h9z" fill="#24a078"/><path d="M47 40l-2.500 6h5z" fill="#3a8a44"/></svg></div><div class="lb" style="width:72.5px"><svg style="left:1.5px;top:1.8px" width="9.400" height="9.800" viewBox="0 0 9 10"><rect x="3" y=".6" width="3" height="5.2" rx="1.500" fill="#ee4f57"/><path d="M1.500 4.300c0 2 1.300 3.100 3 3.100s3-1.100 3-3.100M4.500 7.400v1.800M3 9.300h3" fill="none" stroke="#ee4f57" stroke-width=".9"/><path d="M.8 9.300L8.200 .6" stroke="#ee4f57" stroke-width="1"/></svg></div></div><span class="t" style="left:961.7px;top:212.5px;font-size:8.8px;line-height:11px;color:#f6f6f6;transform:scaleX(0.962);">Endah Heliana</span><div class="tile" style="left:1058px;top:164.3px;"><div class="lb" style="width:34.9px"><svg style="left:1.5px;top:1.8px" width="9.400" height="9.800" viewBox="0 0 9 10"><rect x="3" y=".6" width="3" height="5.2" rx="1.500" fill="#ee4f57"/><path d="M1.500 4.300c0 2 1.300 3.100 3 3.100s3-1.100 3-3.100M4.500 7.400v1.800M3 9.300h3" fill="none" stroke="#ee4f57" stroke-width=".9"/><path d="M.8 9.300L8.200 .6" stroke="#ee4f57" stroke-width="1"/></svg></div></div><span class="t" style="left:1072.7px;top:212.5px;font-size:8.8px;line-height:11px;color:#f6f6f6;transform:scaleX(1.017);">Nico</span><span class="t" style="left:1101.1px;top:188.4px;font-size:9.6px;line-height:12px;color:#fff;font-weight:700;">Nico</span><div class="tile" style="left:1168.7px;top:164.3px;"><div class="lb" style="width:63.0px"><svg style="left:1.5px;top:1.8px" width="9.400" height="9.800" viewBox="0 0 9 10"><rect x="3" y=".6" width="3" height="5.2" rx="1.500" fill="#ee4f57"/><path d="M1.500 4.300c0 2 1.300 3.100 3 3.100s3-1.100 3-3.100M4.500 7.400v1.800M3 9.300h3" fill="none" stroke="#ee4f57" stroke-width=".9"/><path d="M.8 9.300L8.200 .6" stroke="#ee4f57" stroke-width="1"/></svg></div></div><span class="t" style="left:1183.4px;top:212.5px;font-size:8.8px;line-height:11px;color:#f6f6f6;transform:scaleX(0.970);">Aspita Dyah</span><span class="t" style="left:1194.2px;top:188.4px;font-size:9.6px;line-height:12px;color:#fff;font-weight:700;transform:scaleX(1.010);">Aspita Dyah</span><div class="tile" style="left:615px;top:228.3px;"><div class="lb" style="width:65.6px"><svg style="left:1.5px;top:1.8px" width="9.400" height="9.800" viewBox="0 0 9 10"><rect x="3" y=".6" width="3" height="5.2" rx="1.500" fill="#ee4f57"/><path d="M1.500 4.300c0 2 1.300 3.100 3 3.100s3-1.100 3-3.100M4.500 7.400v1.800M3 9.300h3" fill="none" stroke="#ee4f57" stroke-width=".9"/><path d="M.8 9.300L8.200 .6" stroke="#ee4f57" stroke-width="1"/></svg></div></div><span class="t" style="left:629.7px;top:276.5px;font-size:8.8px;line-height:11px;color:#f6f6f6;transform:scaleX(1.014);">Arief Indarto</span><span class="t" style="left:638.2px;top:252.4px;font-size:9.6px;line-height:12px;color:#fff;font-weight:700;transform:scaleX(1.061);">Arief Indarto</span><div class="tile" style="left:726px;top:228.3px;"><div class="lb" style="width:69.6px"><svg style="left:1.5px;top:1.8px" width="9.400" height="9.800" viewBox="0 0 9 10"><rect x="3" y=".6" width="3" height="5.2" rx="1.500" fill="#ee4f57"/><path d="M1.500 4.300c0 2 1.300 3.100 3 3.100s3-1.100 3-3.100M4.500 7.400v1.800M3 9.300h3" fill="none" stroke="#ee4f57" stroke-width=".9"/><path d="M.8 9.300L8.200 .6" stroke="#ee4f57" stroke-width="1"/></svg></div></div><span class="t" style="left:740.7px;top:276.5px;font-size:8.8px;line-height:11px;color:#f6f6f6;transform:scaleX(0.919);">BPE - Sadiyah</span><span class="t" style="left:748.1px;top:252.4px;font-size:9.6px;line-height:12px;color:#fff;font-weight:700;transform:scaleX(0.965);">BPE - Sadiyah</span><div class="tile" style="left:836.6px;top:228.3px;"><div class="av" style="background:#b98a72"><svg style="left:0;top:0" width="53" height="53.500" viewBox="0 0 53 53.500"><rect width="53" height="53.500" fill="#b98a72"/>
<g filter="url(#b1)">
<path d="M0 0h53v9H0z" fill="#c9a894"/><path d="M0 0h12v26H0z" fill="#cbb7a8"/>
<rect x="40" y="10" width="13" height="44" fill="#b47a62"/><rect x="47" y="13" width="2" height="36" fill="#9a6450"/>
<rect x="24" y="17" width="17" height="30" rx="2" fill="#8a5a48"/><rect x="25.500" y="18.500" width="14.500" height="27" rx="1.500" fill="#e0e9ee"/><rect x="25.500" y="30" width="14.500" height="15" fill="#cfd8d2"/>
<path d="M0 53.500V29c4-3 9-3 13-1l16 26z" fill="#e94d1c"/>
<path d="M3 22c5-2 9-2 12 0l14 19v12.500H12C9 42 5 32 3 22z" fill="#1c2438"/>
<path d="M8 28l6-1 7 12-3 6z" fill="#c9c23f"/><path d="M14 36l6 8v9.500h-4z" fill="#46608a"/>
<path d="M20 31l6 9v13.500h-6z" fill="#e94d1c"/>
<ellipse cx="20.500" cy="19.500" rx="7" ry="8.800" fill="#b37253" transform="rotate(-12 20.500 19.500)"/>
<path d="M12.500 15c1-6 6-8.500 11-7.500 3 .6 4.500 2.500 4.500 4.500-4-1.500-8-.5-10 2s-3 4.500-5.500 1z" fill="#2a2020"/>
<rect x="7.500" y="12.500" width="6" height="12.500" rx="3" fill="#24222a"/><rect x="25.500" y="20" width="8" height="2" fill="#2a2224"/><ellipse cx="27" cy="25" rx="2" ry="4" fill="#2a2224"/>
</g></svg></div><div class="lb" style="width:105.9px"><svg style="left:1.5px;top:1.8px" width="9.400" height="9.800" viewBox="0 0 9 10"><rect x="3" y=".6" width="3" height="5.2" rx="1.500" fill="#ee4f57"/><path d="M1.500 4.300c0 2 1.300 3.100 3 3.100s3-1.100 3-3.100M4.500 7.400v1.800M3 9.300h3" fill="none" stroke="#ee4f57" stroke-width=".9"/><path d="M.8 9.300L8.200 .6" stroke="#ee4f57" stroke-width="1"/></svg></div></div><span class="t" style="left:851.3px;top:276.5px;font-size:8.8px;line-height:11px;color:#f6f6f6;transform:scaleX(0.947);">Noermansyah - PPSD...</span><div class="tile" style="left:947px;top:228.3px;"><div class="lb" style="width:60.6px"><svg style="left:1.5px;top:1.8px" width="9.400" height="9.800" viewBox="0 0 9 10"><rect x="3" y=".6" width="3" height="5.2" rx="1.500" fill="#ee4f57"/><path d="M1.500 4.300c0 2 1.300 3.100 3 3.100s3-1.100 3-3.100M4.500 7.400v1.800M3 9.300h3" fill="none" stroke="#ee4f57" stroke-width=".9"/><path d="M.8 9.300L8.200 .6" stroke="#ee4f57" stroke-width="1"/></svg></div></div><span class="t" style="left:961.7px;top:276.5px;font-size:8.8px;line-height:11px;color:#f6f6f6;transform:scaleX(0.987);">Tien Kartini</span><span class="t" style="left:973.5px;top:252.4px;font-size:9.6px;line-height:12px;color:#fff;font-weight:700;transform:scaleX(1.026);">Tien Kartini</span><div class="tile" style="left:1058px;top:228.3px;"><div class="av" style="background:#0a86d8"></div><div style="position:absolute;left:0px;top:7.4px;width:107px;text-align:center;font-size:32px;line-height:38px;color:#fff">n</div><div class="lb" style="width:98.2px"><svg style="left:1.5px;top:1.8px" width="9.400" height="9.800" viewBox="0 0 9 10"><rect x="3" y=".6" width="3" height="5.2" rx="1.500" fill="#ee4f57"/><path d="M1.500 4.300c0 2 1.300 3.100 3 3.100s3-1.100 3-3.100M4.500 7.400v1.800M3 9.300h3" fill="none" stroke="#ee4f57" stroke-width=".9"/><path d="M.8 9.300L8.200 .6" stroke="#ee4f57" stroke-width="1"/></svg></div></div><span class="t" style="left:1072.7px;top:276.5px;font-size:8.8px;line-height:11px;color:#f6f6f6;transform:scaleX(0.960);">BPE - Noer Rochman</span><div class="tile" style="left:1168.7px;top:228.3px;"><div class="av" style="background:#55534c"><svg style="left:0;top:0" width="53" height="53.500" viewBox="0 0 53 53.500"><rect width="53" height="53.500" fill="#55534c"/>
<g filter="url(#b1)">
<rect x="0" y="0" width="53" height="8" fill="#3a3e3a"/>
<ellipse cx="10" cy="9" rx="11" ry="6" fill="#2a6a72"/><rect x="3" y="0" width="10" height="3" fill="#c84a5a"/><rect x="0" y="0" width="4" height="3" fill="#e8c84a"/>
<rect x="22" y="2" width="8" height="10" fill="#26262a"/><rect x="30" y="2" width="14" height="7" fill="#3e5a4a"/><ellipse cx="47" cy="3.500" rx="5" ry="2.500" fill="#d8d8d4"/>
<ellipse cx="48" cy="15.500" rx="6" ry="4.500" fill="#c8607a"/><rect x="42" y="18" width="11" height="5" fill="#d8d0c4"/><rect x="46" y="23" width="7" height="5" fill="#d8c44a"/>
<rect x="44" y="29" width="9" height="10" fill="#2e3a5a"/><path d="M40 30l13 12v11.500H40z" fill="#b9c98a"/><path d="M40 31l13 10" stroke="#222" stroke-width="1.500"/>
<rect x="0" y="15" width="6" height="8" fill="#d8d8d0"/><rect x="3" y="17" width="12" height="9" fill="#7a8a4a"/>
<path d="M0 27c4-2 9-2 13 0v14H0z" fill="#b3a070"/><ellipse cx="15" cy="20" rx="3.500" ry="3" fill="#e0dcd8"/><ellipse cx="21" cy="18" rx="2.500" ry="3" fill="#2a8a4a"/>
<rect x="0" y="40" width="8" height="13.500" fill="#2a2a2c"/>
<path d="M5 53.500c0-9 4-13 10-15l24-1c5 2 8 6 9 16z" fill="#d5d8dc"/>
<path d="M9 53.500c-1-8 2-14 9-17 2-9 4-20 11-24 6-3 12 0 13 8 1 7 0 14-1 19 2 4 3 9 2 14z" fill="#2b5e9c"/>
<ellipse cx="33" cy="28" rx="7.200" ry="8.500" fill="#dcae96"/>
<path d="M29.500 32c2 2 5.500 2 7.500-.5-1 3-6 3.500-7.500.5z" fill="#fff"/><path d="M29 24.500h3M35 24h3" stroke="#3a2a24" stroke-width=".8"/>
</g></svg></div><div class="lb" style="width:105.8px"><svg style="left:1.5px;top:1.8px" width="9.400" height="9.800" viewBox="0 0 9 10"><rect x="3" y=".6" width="3" height="5.2" rx="1.500" fill="#ee4f57"/><path d="M1.500 4.300c0 2 1.300 3.100 3 3.100s3-1.100 3-3.100M4.500 7.400v1.800M3 9.300h3" fill="none" stroke="#ee4f57" stroke-width=".9"/><path d="M.8 9.300L8.200 .6" stroke="#ee4f57" stroke-width="1"/></svg></div></div><span class="t" style="left:1183.4px;top:276.5px;font-size:8.8px;line-height:11px;color:#f6f6f6;transform:scaleX(0.899);">Rakhma : PPSDM KEB...</span><div class="tile" style="left:615px;top:292.3px;"><div class="av" style="background:#8f6f63"></div><div style="position:absolute;left:0px;top:16.9px;width:107px;text-align:center;font-size:21.8px;line-height:26px;color:#fff;-webkit-text-stroke:.45px #fff">W</div><div class="lb" style="width:91.7px"><svg style="left:1.5px;top:1.8px" width="9.400" height="9.800" viewBox="0 0 9 10"><rect x="3" y=".6" width="3" height="5.2" rx="1.500" fill="#ee4f57"/><path d="M1.500 4.300c0 2 1.300 3.100 3 3.100s3-1.100 3-3.100M4.500 7.400v1.800M3 9.300h3" fill="none" stroke="#ee4f57" stroke-width=".9"/><path d="M.8 9.300L8.200 .6" stroke="#ee4f57" stroke-width="1"/></svg></div></div><span class="t" style="left:629.7px;top:340.5px;font-size:8.8px;line-height:11px;color:#f6f6f6;transform:scaleX(0.947);">Waluyo Jati KESDM</span><div class="tile" style="left:726px;top:292.3px;"><div class="lb" style="width:71.3px"><svg style="left:1.5px;top:1.8px" width="9.400" height="9.800" viewBox="0 0 9 10"><rect x="3" y=".6" width="3" height="5.2" rx="1.500" fill="#ee4f57"/><path d="M1.500 4.300c0 2 1.300 3.100 3 3.100s3-1.100 3-3.100M4.500 7.400v1.800M3 9.300h3" fill="none" stroke="#ee4f57" stroke-width=".9"/><path d="M.8 9.300L8.200 .6" stroke="#ee4f57" stroke-width="1"/></svg></div></div><span class="t" style="left:740.7px;top:340.5px;font-size:8.8px;line-height:11px;color:#f6f6f6;transform:scaleX(0.957);">Rifka Sofianita</span><span class="t" style="left:745.8px;top:316.4px;font-size:9.6px;line-height:12px;color:#fff;font-weight:700;transform:scaleX(1.013);">Rifka Sofianita</span><div class="tile" style="left:836.6px;top:292.3px;"><div class="lb" style="width:107.0px"><svg style="left:1.5px;top:1.8px" width="9.400" height="9.800" viewBox="0 0 9 10"><rect x="3" y=".6" width="3" height="5.2" rx="1.500" fill="#ee4f57"/><path d="M1.500 4.300c0 2 1.300 3.100 3 3.100s3-1.100 3-3.100M4.500 7.400v1.800M3 9.300h3" fill="none" stroke="#ee4f57" stroke-width=".9"/><path d="M.8 9.300L8.200 .6" stroke="#ee4f57" stroke-width="1"/></svg></div></div><span class="t" style="left:851.3px;top:340.5px;font-size:8.8px;line-height:11px;color:#f6f6f6;transform:scaleX(0.930);">BPE- Stepanus Wisnu ...</span><span class="t" style="left:851.2px;top:316.4px;font-size:9.6px;line-height:12px;color:#fff;font-weight:700;transform:scaleX(0.979);">BPE-  Stepanus...</span><div class="tile" style="left:947px;top:292.3px;"><div class="lb" style="width:84.7px"><svg style="left:1.5px;top:1.8px" width="9.400" height="9.800" viewBox="0 0 9 10"><rect x="3" y=".6" width="3" height="5.2" rx="1.500" fill="#ee4f57"/><path d="M1.500 4.300c0 2 1.300 3.100 3 3.100s3-1.100 3-3.100M4.500 7.400v1.800M3 9.300h3" fill="none" stroke="#ee4f57" stroke-width=".9"/><path d="M.8 9.300L8.200 .6" stroke="#ee4f57" stroke-width="1"/></svg></div></div><span class="t" style="left:961.7px;top:340.5px;font-size:8.8px;line-height:11px;color:#f6f6f6;transform:scaleX(1.025);">berliana deborah</span><span class="t" style="left:961.5px;top:316.4px;font-size:9.6px;line-height:12px;color:#fff;font-weight:700;transform:scaleX(1.009);">berliana deborah</span><div class="tile" style="left:1058px;top:292.3px;"><div class="lb" style="width:73.2px"><svg style="left:1.5px;top:1.8px" width="9.400" height="9.800" viewBox="0 0 9 10"><rect x="3" y=".6" width="3" height="5.2" rx="1.500" fill="#ee4f57"/><path d="M1.500 4.300c0 2 1.300 3.100 3 3.100s3-1.100 3-3.100M4.500 7.400v1.800M3 9.300h3" fill="none" stroke="#ee4f57" stroke-width=".9"/><path d="M.8 9.300L8.200 .6" stroke="#ee4f57" stroke-width="1"/></svg></div></div><span class="t" style="left:1072.7px;top:340.5px;font-size:8.8px;line-height:11px;color:#f6f6f6;transform:scaleX(0.974);">Hendry Guntur</span><span class="t" style="left:1076.5px;top:316.4px;font-size:9.6px;line-height:12px;color:#fff;font-weight:700;transform:scaleX(1.034);">Hendry Guntur</span><div class="tile" style="left:1168.7px;top:292.3px;"><div class="av" style="background:#ab47bc"></div><div style="position:absolute;left:0px;top:12.9px;width:107px;text-align:center;font-size:29.5px;line-height:35px;color:#fff">D</div><div class="lb" style="width:106.1px"><svg style="left:1.5px;top:1.8px" width="9.400" height="9.800" viewBox="0 0 9 10"><rect x="3" y=".6" width="3" height="5.2" rx="1.500" fill="#ee4f57"/><path d="M1.500 4.300c0 2 1.300 3.100 3 3.100s3-1.100 3-3.100M4.500 7.400v1.800M3 9.300h3" fill="none" stroke="#ee4f57" stroke-width=".9"/><path d="M.8 9.300L8.200 .6" stroke="#ee4f57" stroke-width="1"/></svg></div></div><span class="t" style="left:1183.4px;top:340.5px;font-size:8.8px;line-height:11px;color:#f6f6f6;transform:scaleX(0.931);">BPE - Davin Tara Janit...</span><div class="tile" style="left:615px;top:356.3px;"><div class="lb" style="width:30.6px"><svg style="left:1.5px;top:1.8px" width="9.400" height="9.800" viewBox="0 0 9 10"><rect x="3" y=".6" width="3" height="5.2" rx="1.500" fill="#ee4f57"/><path d="M1.500 4.300c0 2 1.300 3.100 3 3.100s3-1.100 3-3.100M4.500 7.400v1.800M3 9.300h3" fill="none" stroke="#ee4f57" stroke-width=".9"/><path d="M.8 9.300L8.200 .6" stroke="#ee4f57" stroke-width="1"/></svg></div></div><span class="t" style="left:629.7px;top:404.5px;font-size:8.8px;line-height:11px;color:#f6f6f6;transform:scaleX(0.992);">elin</span><span class="t" style="left:660.1px;top:380.4px;font-size:9.6px;line-height:12px;color:#fff;font-weight:700;transform:scaleX(1.010);">elin</span><div class="tile" style="left:726px;top:356.3px;"><div class="av" style="background:#78909c"></div><div style="position:absolute;left:0px;top:12.7px;width:107px;text-align:center;font-size:29.5px;line-height:35px;color:#fff">L</div><div class="lb" style="width:83.5px"><svg style="left:1.5px;top:1.8px" width="9.400" height="9.800" viewBox="0 0 9 10"><rect x="3" y=".6" width="3" height="5.2" rx="1.500" fill="#ee4f57"/><path d="M1.500 4.300c0 2 1.300 3.100 3 3.100s3-1.100 3-3.100M4.500 7.400v1.800M3 9.300h3" fill="none" stroke="#ee4f57" stroke-width=".9"/><path d="M.8 9.300L8.200 .6" stroke="#ee4f57" stroke-width="1"/></svg></div></div><span class="t" style="left:740.7px;top:404.5px;font-size:8.8px;line-height:11px;color:#f6f6f6;transform:scaleX(0.957);">Putria Sanfishdah</span><div class="tile" style="left:836.6px;top:356.3px;"><div class="lb" style="width:58.4px"><svg style="left:1.5px;top:1.8px" width="9.400" height="9.800" viewBox="0 0 9 10"><rect x="3" y=".6" width="3" height="5.2" rx="1.500" fill="#ee4f57"/><path d="M1.500 4.300c0 2 1.300 3.100 3 3.100s3-1.100 3-3.100M4.500 7.400v1.800M3 9.300h3" fill="none" stroke="#ee4f57" stroke-width=".9"/><path d="M.8 9.300L8.200 .6" stroke="#ee4f57" stroke-width="1"/></svg></div></div><span class="t" style="left:851.3px;top:404.5px;font-size:8.8px;line-height:11px;color:#f6f6f6;transform:scaleX(0.930);">Ival Fahlevi</span><span class="t" style="left:864.2px;top:380.4px;font-size:9.6px;line-height:12px;color:#fff;font-weight:700;">Ival Fahlevi</span><div class="tile" style="left:947px;top:356.3px;"><div class="lb" style="width:107.0px"><svg style="left:1.5px;top:1.8px" width="9.400" height="9.800" viewBox="0 0 9 10"><rect x="3" y=".6" width="3" height="5.2" rx="1.500" fill="#ee4f57"/><path d="M1.500 4.300c0 2 1.300 3.100 3 3.100s3-1.100 3-3.100M4.500 7.400v1.800M3 9.300h3" fill="none" stroke="#ee4f57" stroke-width=".9"/><path d="M.8 9.300L8.200 .6" stroke="#ee4f57" stroke-width="1"/></svg></div></div><span class="t" style="left:961.7px;top:404.5px;font-size:8.8px;line-height:11px;color:#f6f6f6;transform:scaleX(0.960);">Devi Khairinawati - PP...</span><span class="t" style="left:956.8px;top:380.4px;font-size:9.6px;line-height:12px;color:#fff;font-weight:700;transform:scaleX(1.032);">Devi  Khairinawa...</span><div class="tile" style="left:1058px;top:356.3px;"><div class="av" style="background:#1b8fe0"><svg style="left:0;top:0" width="53" height="53.500" viewBox="0 0 53 53.500"><defs><linearGradient id="rg" x1="0" y1="1" x2="1" y2="0"><stop offset="0" stop-color="#1666b2"/><stop offset=".5" stop-color="#1b8fe0"/><stop offset="1" stop-color="#27a0ea"/></linearGradient></defs>
<rect width="53" height="53.500" fill="url(#rg)"/>
<g fill="#d6ecfa"><rect x="1" y="5" width="3" height="2"/><rect x="1" y="11" width="8" height="1.800"/><rect x="1" y="14" width="7" height="1.800"/><circle cx="51.500" cy="5.500" r="1"/></g>
<g filter="url(#b1)">
<path d="M18 53.500c0-7 3-10 8-11l9-1c8 2 14 5 18 8v4z" fill="#e9eef0"/><path d="M26 42l3 11.500h-8z" fill="#3a4048"/>
<path d="M15.500 28C13.500 17 18 11 26.500 11S39.500 17 37.500 28z" fill="#181616"/><ellipse cx="26.500" cy="30" rx="9.800" ry="12.500" fill="#9b6a4b"/><path d="M17.500 24c1.500-4.500 5-6 9-6s7.500 1.500 9 6c-3-2-5.500-3-9-3s-6 1-9 3z" fill="#181616"/>
<path d="M20 28h5M29 28h5" stroke="#2a1a14" stroke-width="1"/>
</g></svg></div><div class="lb" style="width:51.5px"><svg style="left:1.5px;top:1.8px" width="9.400" height="9.800" viewBox="0 0 9 10"><rect x="3" y=".6" width="3" height="5.2" rx="1.500" fill="#ee4f57"/><path d="M1.500 4.300c0 2 1.300 3.100 3 3.100s3-1.100 3-3.100M4.500 7.400v1.800M3 9.300h3" fill="none" stroke="#ee4f57" stroke-width=".9"/><path d="M.8 9.300L8.200 .6" stroke="#ee4f57" stroke-width="1"/></svg></div></div><span class="t" style="left:1072.7px;top:404.5px;font-size:8.8px;line-height:11px;color:#f6f6f6;transform:scaleX(0.966);">Rohenda</span><div class="tile" style="left:1168.7px;top:356.3px;"><div class="lb" style="width:40.8px"><svg style="left:1.5px;top:1.8px" width="9.400" height="9.800" viewBox="0 0 9 10"><rect x="3" y=".6" width="3" height="5.2" rx="1.500" fill="#ee4f57"/><path d="M1.500 4.300c0 2 1.300 3.100 3 3.100s3-1.100 3-3.100M4.500 7.400v1.800M3 9.300h3" fill="none" stroke="#ee4f57" stroke-width=".9"/><path d="M.8 9.300L8.200 .6" stroke="#ee4f57" stroke-width="1"/></svg></div></div><span class="t" style="left:1183.4px;top:404.5px;font-size:8.8px;line-height:11px;color:#f6f6f6;transform:scaleX(0.973);">hertya</span><span class="t" style="left:1207.4px;top:380.4px;font-size:9.6px;line-height:12px;color:#fff;font-weight:700;transform:scaleX(1.031);">hertya</span><div class="tile" style="left:615px;top:420.3px;"><div class="av" style="background:#2f2f2f"><svg style="left:0;top:0" width="53" height="53.500" viewBox="0 0 53 53.500"><g filter="url(#b1)">
<path d="M17.500 19c-1-2-1-5 .5-7.500-1.500-3.500 2-5 5-4.500 4-1.500 9-1 12 1.500 2 2.500 2 7 1 10.500z" fill="#6e4d39"/>
<ellipse cx="27" cy="22" rx="9" ry="10" fill="#dcbca6"/>
<path d="M18.500 23c0 9 3 15 8.500 15s8.500-6 8.500-15c-2 4-5 5-8.500 5s-6.500-1-8.500-5z" fill="#71503f"/>
<path d="M18 13c2-3 5-4.500 9-4.500s7 1.500 9 4.500c-3-1-6-1.500-9-1.500s-6 .5-9 1.500z" fill="#6e4d39"/>
<circle cx="22.800" cy="21.500" r="3.400" fill="#e2cdbd" stroke="#5a5a5e" stroke-width=".8"/><circle cx="31.200" cy="21.500" r="3.400" fill="#e2cdbd" stroke="#5a5a5e" stroke-width=".8"/>
<path d="M8 31l3 3-1-6 2.500 5 .5-6.500 1.500 6 2-5.500 0 6.500 4-2-2.500 6.500c-1 3.500-4 5-7 4.500-3-.5-5-3-4.500-6.500z" fill="#e4c6ae"/>
<path d="M46 31l-3 3 1-6-2.500 5-.5-6.500-1.500 6-2-5.500 0 6.500-4-2 2.500 6.500c1 3.500 4 5 7 4.500 3-.5 5-3 4.500-6.500z" fill="#e4c6ae"/>
</g></svg></div><div class="lb" style="width:54.5px"><svg style="left:1.5px;top:1.8px" width="9.400" height="9.800" viewBox="0 0 9 10"><rect x="3" y=".6" width="3" height="5.2" rx="1.500" fill="#ee4f57"/><path d="M1.500 4.300c0 2 1.300 3.100 3 3.100s3-1.100 3-3.100M4.500 7.400v1.800M3 9.300h3" fill="none" stroke="#ee4f57" stroke-width=".9"/><path d="M.8 9.300L8.200 .6" stroke="#ee4f57" stroke-width="1"/></svg></div></div><span class="t" style="left:629.7px;top:468.5px;font-size:8.8px;line-height:11px;color:#f6f6f6;transform:scaleX(0.935);">Bagus RD</span><div class="tile" style="left:726px;top:420.3px;"><div class="lb" style="width:86.5px"><svg style="left:1.5px;top:1.8px" width="9.400" height="9.800" viewBox="0 0 9 10"><rect x="3" y=".6" width="3" height="5.2" rx="1.500" fill="#ee4f57"/><path d="M1.500 4.300c0 2 1.300 3.100 3 3.100s3-1.100 3-3.100M4.500 7.400v1.800M3 9.300h3" fill="none" stroke="#ee4f57" stroke-width=".9"/><path d="M.8 9.300L8.200 .6" stroke="#ee4f57" stroke-width="1"/></svg></div></div><span class="t" style="left:740.7px;top:468.5px;font-size:8.8px;line-height:11px;color:#f6f6f6;transform:scaleX(0.987);">Ahmad Nasarudin</span><span class="t" style="left:737.3px;top:444.4px;font-size:9.6px;line-height:12px;color:#fff;font-weight:700;transform:scaleX(1.028);">Ahmad Nasarudin</span><div class="tile" style="left:836.6px;top:420.3px;"><div class="av" style="background:#7b1fa2"></div><div style="position:absolute;left:0px;top:12.1px;width:107px;text-align:center;font-size:31px;line-height:37px;color:#fff">b</div><div class="lb" style="width:34.0px"><svg style="left:1.5px;top:1.8px" width="9.400" height="9.800" viewBox="0 0 9 10"><rect x="3" y=".6" width="3" height="5.2" rx="1.500" fill="#ee4f57"/><path d="M1.500 4.300c0 2 1.300 3.100 3 3.100s3-1.100 3-3.100M4.500 7.400v1.800M3 9.300h3" fill="none" stroke="#ee4f57" stroke-width=".9"/><path d="M.8 9.300L8.200 .6" stroke="#ee4f57" stroke-width="1"/></svg></div></div><span class="t" style="left:851.3px;top:468.5px;font-size:8.8px;line-height:11px;color:#f6f6f6;transform:scaleX(0.940);">Zara</span><div class="tile" style="left:947px;top:420.3px;"><div class="lb" style="width:34.7px"><svg style="left:1.5px;top:1.8px" width="9.400" height="9.800" viewBox="0 0 9 10"><rect x="3" y=".6" width="3" height="5.2" rx="1.500" fill="#ee4f57"/><path d="M1.500 4.300c0 2 1.300 3.100 3 3.100s3-1.100 3-3.100M4.500 7.400v1.800M3 9.300h3" fill="none" stroke="#ee4f57" stroke-width=".9"/><path d="M.8 9.300L8.200 .6" stroke="#ee4f57" stroke-width="1"/></svg></div></div><span class="t" style="left:961.7px;top:468.5px;font-size:8.8px;line-height:11px;color:#f6f6f6;transform:scaleX(1.005);">Nevi</span><span class="t" style="left:990.1px;top:444.4px;font-size:9.6px;line-height:12px;color:#fff;font-weight:700;transform:scaleX(1.026);">Nevi</span><div class="tile" style="left:1058px;top:420.3px;"><div class="av" style="background:#fdfdfd"><svg style="left:0;top:0" width="53" height="53.500" viewBox="0 0 53 53.500"><rect width="53" height="53.500" fill="#fdfdfd"/>
<g filter="url(#b1)">
<path d="M6 53.500c2-5 8-7 14-8h14c6 1 12 3 14 8z" fill="#eef0f2"/>
<path d="M13.500 25C11 12 16 2 27 2s16 10 13.500 23z" fill="#1d1c1c"/><ellipse cx="27" cy="30.500" rx="11.300" ry="16.500" fill="#cb9c7e"/><path d="M15 21c1.500-6 6-8.500 12-8.500s10.500 2.500 12 8.500c-3.500-3-7-4-12-4s-8.500 1-12 4z" fill="#1d1c1c"/>
<path d="M14 23.500h26" stroke="#333" stroke-width=".8"/><rect x="15.500" y="22.500" width="9.500" height="5" rx="1" fill="#b8a69c" stroke="#2a2a2a" stroke-width="1"/><rect x="28.500" y="22.500" width="9.500" height="5" rx="1" fill="#b8a69c" stroke="#2a2a2a" stroke-width="1"/>
<path d="M22 36c3-1.500 7-1.500 10 0" stroke="#8a6450" stroke-width="1.200" fill="none"/><ellipse cx="27" cy="39" rx="3" ry="1" fill="#b06a5e"/>
<path d="M20 41c3 3.500 11 3.500 14 0-1 4-13 4-14 0z" fill="#9a7a66"/>
</g></svg></div><div class="lb" style="width:70.4px"><svg style="left:1.5px;top:1.8px" width="9.400" height="9.800" viewBox="0 0 9 10"><rect x="3" y=".6" width="3" height="5.2" rx="1.500" fill="#ee4f57"/><path d="M1.500 4.300c0 2 1.300 3.100 3 3.100s3-1.100 3-3.100M4.500 7.400v1.800M3 9.300h3" fill="none" stroke="#ee4f57" stroke-width=".9"/><path d="M.8 9.300L8.200 .6" stroke="#ee4f57" stroke-width="1"/></svg></div></div><span class="t" style="left:1072.7px;top:468.5px;font-size:8.8px;line-height:11px;color:#f6f6f6;transform:scaleX(0.975);">Zuhud Andrya</span><div class="tile" style="left:1168.7px;top:420.3px;"><div class="lb" style="width:67.5px"><svg style="left:1.5px;top:1.8px" width="9.400" height="9.800" viewBox="0 0 9 10"><rect x="3" y=".6" width="3" height="5.2" rx="1.500" fill="#ee4f57"/><path d="M1.500 4.300c0 2 1.300 3.100 3 3.100s3-1.100 3-3.100M4.500 7.400v1.800M3 9.300h3" fill="none" stroke="#ee4f57" stroke-width=".9"/><path d="M.8 9.300L8.200 .6" stroke="#ee4f57" stroke-width="1"/></svg></div></div><span class="t" style="left:1183.4px;top:468.5px;font-size:8.8px;line-height:11px;color:#f6f6f6;transform:scaleX(0.974);">agus yulianto</span><span class="t" style="left:1191.1px;top:444.4px;font-size:9.6px;line-height:12px;color:#fff;font-weight:700;transform:scaleX(1.006);">agus yulianto</span><div class="tile" style="left:615px;top:484.3px;"><div class="av" style="background:#a02d8a"><svg style="left:0;top:0" width="53" height="53.500" viewBox="0 0 53 53.500"><defs><linearGradient id="hg" x1="0" y1="0" x2="0" y2="1"><stop offset="0" stop-color="#c93379"/><stop offset=".6" stop-color="#a02d8a"/><stop offset="1" stop-color="#6f2a92"/></linearGradient><clipPath id="hc"><circle cx="26.500" cy="23" r="19.500"/></clipPath></defs>
<rect width="53" height="53.500" fill="url(#hg)"/>
<g fill="#fff"><rect x="2" y="2" width="9" height="2"/><rect x="44" y="2" width="7" height="3"/></g><rect x="24" y="1" width="5" height="4" rx="1" fill="#f0c030"/>
<circle cx="26.500" cy="23" r="20.300" fill="none" stroke="#dca443" stroke-width="1.200"/>
<g clip-path="url(#hc)" filter="url(#b1)"><rect x="6" y="3" width="42" height="41" fill="#9aa0a6"/><rect x="8" y="10" width="15" height="14" fill="#b9bcbe"/><g fill="#3a3c42"><rect x="10" y="12" width="2.500" height="2.500"/><rect x="14" y="12" width="2.500" height="2.500"/><rect x="18" y="12" width="2.500" height="2.500"/><rect x="10" y="17" width="2.500" height="2.500"/><rect x="14" y="17" width="2.500" height="2.500"/><rect x="18" y="17" width="2.500" height="2.500"/></g>
<rect x="24" y="6" width="5" height="18" fill="#d8d4c4"/><rect x="6" y="28" width="14" height="16" fill="#c9a06a"/>
<path d="M12 44c0-9 4-16 12-18l14-1c6 2 9 9 9 19z" fill="#1e2b4c"/>
<ellipse cx="33" cy="15.500" rx="5.800" ry="7" fill="#8b5c42"/><path d="M28 18c1 5 3 7 5.500 7s4.500-2 5-7c-1.500 2-3 2.500-5 2.500S30 20 28 18z" fill="#3a2a26"/>
<circle cx="37" cy="31" r="1.600" fill="#e8c040"/></g>
<path d="M0 53.500l0-8 5 3 3 5zM53 53.500l0-8-5 3-3 5z" fill="#dca443"/>
<g fill="#fff"><path d="M15 43h4l-2.500 6h-2l2-4.500H15z"/><rect x="20.500" y="43.500" width="14" height="1.600"/><rect x="20.500" y="46.300" width="10" height="1.600"/></g></svg></div><div class="lb" style="width:83.6px"><svg style="left:1.5px;top:1.8px" width="9.400" height="9.800" viewBox="0 0 9 10"><rect x="3" y=".6" width="3" height="5.2" rx="1.500" fill="#ee4f57"/><path d="M1.500 4.300c0 2 1.300 3.100 3 3.100s3-1.100 3-3.100M4.500 7.400v1.800M3 9.300h3" fill="none" stroke="#ee4f57" stroke-width=".9"/><path d="M.8 9.300L8.200 .6" stroke="#ee4f57" stroke-width="1"/></svg></div></div><span class="t" style="left:629.7px;top:532.5px;font-size:8.8px;line-height:11px;color:#f6f6f6;transform:scaleX(1.009);">Hendro Kristanto</span><div class="tile" style="left:726px;top:484.3px;"><div class="av" style="background:#33691e"></div><div style="position:absolute;left:0px;top:16.4px;width:107px;text-align:center;font-size:22.5px;line-height:27px;color:#fff;-webkit-text-stroke:.45px #fff">Z</div><div class="lb" style="width:77.6px"><svg style="left:1.5px;top:1.8px" width="9.400" height="9.800" viewBox="0 0 9 10"><rect x="3" y=".6" width="3" height="5.2" rx="1.500" fill="#ee4f57"/><path d="M1.500 4.300c0 2 1.300 3.100 3 3.100s3-1.100 3-3.100M4.500 7.400v1.800M3 9.300h3" fill="none" stroke="#ee4f57" stroke-width=".9"/><path d="M.8 9.300L8.200 .6" stroke="#ee4f57" stroke-width="1"/></svg></div></div><span class="t" style="left:740.7px;top:532.5px;font-size:8.8px;line-height:11px;color:#f6f6f6;transform:scaleX(0.953);">Zainul Pulungan</span><div class="tile" style="left:836.6px;top:484.3px;"><div class="lb" style="width:105.1px"><svg style="left:1.5px;top:1.8px" width="9.400" height="9.800" viewBox="0 0 9 10"><rect x="3" y=".6" width="3" height="5.2" rx="1.500" fill="#ee4f57"/><path d="M1.500 4.300c0 2 1.300 3.100 3 3.100s3-1.100 3-3.100M4.500 7.400v1.800M3 9.300h3" fill="none" stroke="#ee4f57" stroke-width=".9"/><path d="M.8 9.300L8.200 .6" stroke="#ee4f57" stroke-width="1"/></svg></div></div><span class="t" style="left:851.3px;top:532.5px;font-size:8.8px;line-height:11px;color:#f6f6f6;transform:scaleX(0.974);">Latsar Kemendikbud ...</span><span class="t" style="left:848.5px;top:508.4px;font-size:9.6px;line-height:12px;color:#fff;font-weight:700;transform:scaleX(1.008);">Latsar  Kemendi...</span><div class="tile" style="left:947px;top:484.3px;"><div class="av" style="background:#030303"><svg style="left:0;top:0" width="53" height="53.500" viewBox="0 0 53 53.500"><rect width="53" height="53.500" fill="#030303"/>
<g filter="url(#b1)">
<path d="M0 53.500V43c6-4 12-6 18-7h20c7 2 11 5 15 8v9.500z" fill="#ebebeb"/><path d="M22 37l6 9 7-9z" fill="#c9916f"/>
<ellipse cx="28" cy="25" rx="11.500" ry="15" fill="#c9916f"/>
<path d="M16 22c-2-11 3-18.500 12-18.500S42 10 40 22c-1-6-3-9-6-10-4-1-8-1-12 0-3 1-5 4-6 10z" fill="#141212"/>
<path d="M21 31c4 4 10 4 14 0-1 6-13 6-14 0z" fill="#fbfbfb"/><path d="M20 22.500c2-1.200 4-1.200 6 0M30 22.500c2-1.200 4-1.200 6 0" stroke="#2a1a14" stroke-width="1" fill="none"/>
<path d="M40 27c1 4-1 9-6 11" stroke="#1a1a1a" stroke-width="1.300" fill="none"/><ellipse cx="34" cy="38" rx="2" ry="1.200" fill="#1a1a1a"/><rect x="14" y="21" width="2.500" height="6" rx="1" fill="#222"/>
</g></svg></div><div class="lb" style="width:49.5px"><svg style="left:1.5px;top:1.8px" width="9.400" height="9.800" viewBox="0 0 9 10"><rect x="3" y=".6" width="3" height="5.2" rx="1.500" fill="#ee4f57"/><path d="M1.500 4.300c0 2 1.300 3.100 3 3.100s3-1.100 3-3.100M4.500 7.400v1.800M3 9.300h3" fill="none" stroke="#ee4f57" stroke-width=".9"/><path d="M.8 9.300L8.200 .6" stroke="#ee4f57" stroke-width="1"/></svg></div></div><span class="t" style="left:961.7px;top:532.5px;font-size:8.8px;line-height:11px;color:#f6f6f6;transform:scaleX(0.977);">Ginanjar</span><div class="tile" style="left:1058px;top:484.3px;"><div class="lb" style="width:101.5px"><svg style="left:1.5px;top:1.8px" width="9.400" height="9.800" viewBox="0 0 9 10"><rect x="3" y=".6" width="3" height="5.2" rx="1.500" fill="#ee4f57"/><path d="M1.500 4.300c0 2 1.300 3.100 3 3.100s3-1.100 3-3.100M4.500 7.400v1.800M3 9.300h3" fill="none" stroke="#ee4f57" stroke-width=".9"/><path d="M.8 9.300L8.200 .6" stroke="#ee4f57" stroke-width="1"/></svg></div></div><span class="t" style="left:1072.7px;top:532.5px;font-size:8.8px;line-height:11px;color:#f6f6f6;transform:scaleX(0.900);">Karso PPSDM KEBTKE</span><span class="t" style="left:1069.3px;top:508.4px;font-size:9.6px;line-height:12px;color:#fff;font-weight:700;transform:scaleX(0.971);">Karso  PPSDM  K...</span><div class="tile" style="left:1168.7px;top:484.3px;"><div class="av" style="background:#e4e0d6"><svg style="left:0;top:0" width="53" height="53.500" viewBox="0 0 53 53.500"><rect width="53" height="53.500" fill="#e4e0d6"/>
<g filter="url(#b1)">
<rect x="0" y="0" width="30" height="26" fill="#2b3b8b"/>
<g fill="none" stroke="#dfe6f4" stroke-width="2"><path d="M-2 5c9-5 19-4 27 4"/><path d="M-2 11c8-4 17-3 24 3"/></g><g fill="none" stroke="#8f86d8" stroke-width="2"><path d="M-2 17c7-4 14-3 20 2"/><path d="M0 23c6-4 11-3 16 1"/></g>
<rect x="25" y="0" width="8" height="12" fill="#8a8e88"/><rect x="31" y="0" width="22" height="42" fill="#ebe7dc"/>
<rect x="0" y="24" width="17" height="18" fill="#b9b0c6"/><rect x="0" y="24" width="4.500" height="15" fill="#4f9d2f"/><rect x="8" y="29" width="8" height="9" fill="#e8e0c4"/>
<rect x="41" y="18" width="6" height="24" fill="#b98f60"/><rect x="35" y="28" width="7" height="8" fill="#f4ecd0"/><rect x="50" y="30" width="3" height="12" fill="#8aa8d0"/>
<path d="M0 53.500V43c5-3 11-4.500 17-5h20c4 1 7 3 9 5.500l2 10z" fill="#e2592b"/>
<path d="M15.500 44C13 28 16 12.500 26 12.500S38 27 36.500 44c-3 2-7 3-10.500 3s-7.500-1-10.500-3z" fill="#e2592b"/>
<ellipse cx="26" cy="27.500" rx="8.300" ry="10.500" fill="#dcaa92"/>
<path d="M18 22c1.500-5 4.500-7 8-7s7 2 8.500 7c-3-2.500-5.500-3.500-8.500-3.500S21 19.500 18 22z" fill="#2a2320"/>
<ellipse cx="26.500" cy="34" rx="2.600" ry="1" fill="#d0506a"/><path d="M21 25.500h3.500M28.500 25.500H32" stroke="#3a2a24" stroke-width=".9"/>
</g></svg></div><div class="lb" style="width:103.6px"><svg style="left:1.5px;top:1.8px" width="9.400" height="9.800" viewBox="0 0 9 10"><rect x="3" y=".6" width="3" height="5.2" rx="1.500" fill="#ee4f57"/><path d="M1.500 4.300c0 2 1.300 3.100 3 3.100s3-1.100 3-3.100M4.500 7.400v1.800M3 9.300h3" fill="none" stroke="#ee4f57" stroke-width=".9"/><path d="M.8 9.300L8.200 .6" stroke="#ee4f57" stroke-width="1"/></svg></div></div><span class="t" style="left:1183.4px;top:532.5px;font-size:8.8px;line-height:11px;color:#f6f6f6;transform:scaleX(0.932);">BPE - Tuti Rina Rahayu</span><div class="tile" style="left:836.6px;top:548.3px;"><div class="av" style="background:#f1c617"><svg style="left:0;top:0" width="53" height="53.500" viewBox="0 0 53 53.500"><rect width="53" height="53.500" fill="#f1c617"/>
<circle cx="27" cy="26.500" r="25" fill="none" stroke="#3a1a14" stroke-width="2.600"/><circle cx="27" cy="26.500" r="25" fill="none" stroke="#f4f0e8" stroke-width="2.600" stroke-dasharray="2.500 3.500"/><circle cx="27" cy="26.500" r="25" fill="none" stroke="#b8231e" stroke-width="1" stroke-dasharray="1 5" stroke-dashoffset="4"/>
<circle cx="27" cy="26.500" r="21.800" fill="#fefefe" stroke="#e8b830" stroke-width="2.200"/>
<path d="M48 0h5v5z" fill="#fff"/><rect x="44" y="50.500" width="8" height="2" fill="#8a7a2a"/>
<g filter="url(#b1)"><path d="M11.500 42c1-8 5-12 10-13h13c5 1 9 5 10 13z" fill="#aeb6c0"/><path d="M16 42l2-10M21 42l1-12M26 42V30M31 42l-.5-12M36 42l-1.500-11M40 42l-2.500-9" stroke="#6a7684" stroke-width=".7"/>
<path d="M24.500 29l3.500 4 3.500-4z" fill="#a97857"/><ellipse cx="28" cy="21.500" rx="5" ry="6.500" fill="#a97857"/><path d="M22.800 20c-.8-5 2-8 5.400-8s6 3 5 8c-.6-3-2-4-5.200-4s-4.600 1-5.200 4z" fill="#1c1a1a"/><path d="M25.500 25c1.500 1.500 3.500 1.500 5 0" stroke="#fff" stroke-width=".8" fill="none"/></g>
<rect x="13" y="42" width="28" height="3" fill="#f4f4f2"/></svg></div><div class="lb" style="width:65.4px"><svg style="left:1.5px;top:1.8px" width="9.400" height="9.800" viewBox="0 0 9 10"><rect x="3" y=".6" width="3" height="5.2" rx="1.500" fill="#ee4f57"/><path d="M1.500 4.300c0 2 1.300 3.100 3 3.100s3-1.100 3-3.100M4.500 7.400v1.800M3 9.300h3" fill="none" stroke="#ee4f57" stroke-width=".9"/><path d="M.8 9.300L8.200 .6" stroke="#ee4f57" stroke-width="1"/></svg></div></div><span class="t" style="left:851.3px;top:596.5px;font-size:8.8px;line-height:11px;color:#f6f6f6;transform:scaleX(0.934);">Budiman R S</span><div class="tile" style="left:947px;top:548.3px;"><div class="av" style="background:#d9d0ac"><svg style="left:0;top:0" width="53" height="53.500" viewBox="0 0 53 53.500"><rect width="53" height="53.500" fill="#d9d0ac"/>
<g filter="url(#b1)">
<rect x="0" y="0" width="26" height="53.500" fill="#ded6b0"/><rect x="15" y="0" width="8" height="30" fill="#e9dfb4"/>
<rect x="0" y="3" width="10" height="17" rx="1" fill="#8f908a"/><rect x="1.500" y="5" width="5" height="4" fill="#c9c9c4"/><rect x="2" y="11" width="6" height="6" fill="#7a7b76"/>
<rect x="0" y="22" width="12" height="31.500" fill="#cfc6a2"/>
<rect x="25" y="0" width="28" height="12" fill="#3b3b3a"/><rect x="27" y="1.500" width="24" height="8" fill="#5b5e60"/><rect x="25" y="0" width="28" height="2" fill="#d8d8d0"/>
<rect x="37" y="11.500" width="16" height="1.800" fill="#e346a6"/>
<rect x="33" y="14" width="20" height="28" fill="#4a4a42"/><rect x="36" y="17" width="14" height="8" fill="#6a6a5e"/><rect x="34" y="28" width="19" height="12" fill="#33352f"/>
<path d="M8 53.500c1-7 6-11 12-12h10c6 1 11 5 13 12z" fill="#f0f0ee"/><path d="M20 40h9v5l-4.500 3-4.500-3z" fill="#b08060"/>
<ellipse cx="24.500" cy="24" rx="7.500" ry="10" fill="#b58462"/>
<path d="M16.500 22c-1.500-7 2-11.500 8-11.500s9.500 4.500 8 11.500c-.8-4-2.500-5.500-4.500-6-2.500-.6-5-.6-7 0-2 .5-3.700 2-4.500 6z" fill="#141414"/>
<path d="M17 25c5-1.800 10-1.800 15 0 .5 6-2 12-7.500 12S16.500 31 17 25z" fill="#3cb38a"/>
</g></svg></div><div class="lb" style="width:105.6px"><svg style="left:1.5px;top:1.8px" width="9.400" height="9.800" viewBox="0 0 9 10"><rect x="3" y=".6" width="3" height="5.2" rx="1.500" fill="#ee4f57"/><path d="M1.500 4.300c0 2 1.300 3.100 3 3.100s3-1.100 3-3.100M4.500 7.400v1.800M3 9.300h3" fill="none" stroke="#ee4f57" stroke-width=".9"/><path d="M.8 9.300L8.200 .6" stroke="#ee4f57" stroke-width="1"/></svg></div></div><span class="t" style="left:961.7px;top:596.5px;font-size:8.8px;line-height:11px;color:#f6f6f6;transform:scaleX(0.934);">Harries - PPSDM KEB...</span><svg style="left:22px;top:660px" width="18" height="18" viewBox="0 0 18 18"><rect x="5.700" y="2" width="5.200" height="9.200" rx="2.600" fill="#c9c9c9"/><path d="M3.800 8.500c0 3 2 4.800 4.500 4.800s4.500-1.800 4.500-4.800M8.300 13.300v3M5.800 16.600h5" fill="none" stroke="#c9c9c9" stroke-width="1.100"/><path d="M1 17L16.300 1.600" stroke="#e8525a" stroke-width="1.100"/></svg><svg style="left:48.2px;top:667px" width="7" height="5" viewBox="0 0 7 5"><path d="M.8 4L3.500 1.300 6.200 4" fill="none" stroke="#b8b8b8" stroke-width="1"/></svg><span class="t" style="left:16.4px;top:679.1px;font-size:8.3px;line-height:11px;color:#cfcfcf;transform:scaleX(0.981);">Unmute</span><svg style="left:84px;top:660px" width="18" height="18" viewBox="0 0 18 18"><rect x="1" y="5" width="11.300" height="8.600" rx="1.500" fill="#c9c9c9"/><path d="M12.800 8.300l4.200-2.600v7.400l-4.200-2.600z" fill="#c9c9c9"/><path d="M1 17L16.300 1.600" stroke="#e8525a" stroke-width="1.100"/></svg><svg style="left:113.8px;top:667px" width="7" height="5" viewBox="0 0 7 5"><path d="M.8 4L3.500 1.300 6.200 4" fill="none" stroke="#b8b8b8" stroke-width="1"/></svg><span class="t" style="left:72.8px;top:679.1px;font-size:8.3px;line-height:11px;color:#cfcfcf;transform:scaleX(0.958);">Start Video</span><svg style="left:518px;top:663px" width="18" height="13" viewBox="0 0 18 13"><circle cx="5.500" cy="3.500" r="3" fill="#c9c9c9"/><path d="M.3 12.300c0-3.300 2-5 5.200-5s5.200 1.700 5.200 5z" fill="#c9c9c9"/><circle cx="12.300" cy="4.300" r="2.400" fill="#c9c9c9"/><path d="M11.500 12.300c0-2-.6-3.300-1.500-4.300 .7-.4 1.500-.6 2.400-.6 2.600 0 4.200 1.500 4.200 4.900z" fill="#c9c9c9"/></svg><span class="t" style="left:537.6px;top:662.3px;font-size:8.6px;line-height:11px;color:#d2d2d2;transform:scaleX(0.962);">44</span><svg style="left:558.5px;top:667px" width="7" height="5" viewBox="0 0 7 5"><path d="M.8 4L3.500 1.300 6.200 4" fill="none" stroke="#b8b8b8" stroke-width="1"/></svg><span class="t" style="left:506.0px;top:679.2px;font-size:8.3px;line-height:11px;color:#cfcfcf;transform:scaleX(0.946);">Participants</span><svg style="left:593px;top:663px" width="15" height="13" viewBox="0 0 15 13"><path d="M2.500 .5h9.500a2.200 2.200 0 0 1 2.200 2.200v4.500a2.200 2.200 0 0 1-2.200 2.200H7l-3.300 2.800V9.400H2.500A2.200 2.200 0 0 1 .3 7.200V2.700A2.200 2.200 0 0 1 2.500 .5z" fill="#c9c9c9"/></svg><svg style="left:618.5px;top:667px" width="7" height="5" viewBox="0 0 7 5"><path d="M.8 4L3.500 1.300 6.200 4" fill="none" stroke="#b8b8b8" stroke-width="1"/></svg><span class="t" style="left:592.3px;top:679.2px;font-size:8.3px;line-height:11px;color:#cfcfcf;transform:scaleX(0.896);">Chat</span><svg style="left:654.500px;top:663px" width="16" height="12" viewBox="0 0 16 12"><rect width="16" height="12" rx="2.200" fill="#23d959"/><path d="M8 9.300V3.200M5.600 5.500L8 3l2.400 2.500" fill="none" stroke="#111" stroke-width="1.200"/></svg><span class="t" style="left:639.4px;top:679.2px;font-size:8.6px;line-height:11px;color:#23d959;transform:scaleX(0.873);-webkit-text-stroke:.25px #23d959;">Share Screen</span><svg style="left:714.500px;top:662px" width="15" height="15" viewBox="0 0 15 15"><circle cx="7.500" cy="7.500" r="6.600" fill="none" stroke="#c9c9c9" stroke-width="1"/><circle cx="7.500" cy="7.500" r="4.800" fill="#c9c9c9"/></svg><span class="t" style="left:709.5px;top:679.2px;font-size:8.3px;line-height:11px;color:#cfcfcf;transform:scaleX(0.916);">Record</span><svg style="left:768.500px;top:661px" width="17" height="16" viewBox="0 0 17 16"><circle cx="6.700" cy="8.500" r="6" fill="#c9c9c9"/><circle cx="4.800" cy="7.300" r=".8" fill="#1a1a1a"/><circle cx="8.600" cy="7.300" r=".8" fill="#1a1a1a"/><path d="M4 9.800c1.500 1.800 3.900 1.800 5.400 0" fill="none" stroke="#1a1a1a" stroke-width=".9"/><circle cx="12.800" cy="2.800" r="2.900" fill="#1a1a1a"/><path d="M12.800 .6v4.400M10.600 2.800H15" stroke="#c9c9c9" stroke-width="1"/></svg><span class="t" style="left:758.0px;top:679.2px;font-size:8.3px;line-height:11px;color:#cfcfcf;transform:scaleX(0.921);">Reactions</span><svg style="left:822.500px;top:664px" width="12" height="12" viewBox="0 0 12 12"><path d="M.6 4V2.200A1.600 1.600 0 0 1 2.200 .6H6M11.400 7V9.800a1.600 1.600 0 0 1-1.600 1.600H6" fill="none" stroke="#c9c9c9" stroke-width="1.100"/><circle cx="9.500" cy="2.300" r="1.500" fill="none" stroke="#c9c9c9" stroke-width="1"/><circle cx="2.300" cy="9.300" r="1.500" fill="none" stroke="#c9c9c9" stroke-width="1"/></svg><span class="t" style="left:819.7px;top:679.2px;font-size:8.3px;line-height:11px;color:#cfcfcf;transform:scaleX(0.941);">Apps</span><div class="a" style="left:1231px;top:666.500px;width:41px;height:18px;border-radius:4.500px;background:#c32228"></div><span class="t" style="left:1240.3px;top:670.0px;font-size:8.4px;line-height:11px;color:#fff;font-weight:700;transform:scaleX(0.914);">Leave</span><div class="a" style="left:0;top:692.700px;width:1280px;height:27.300px;background:linear-gradient(90deg,#1f2f39 0,#213139 45%,#28353b 50%,#2a373c 100%)"></div><svg style="left:10.500px;top:701px" width="11" height="11" viewBox="0 0 11 11"><path d="M0 1.600L4.600 1V5.100H0zM5.300 .9L11 .1V5.100H5.300zM0 5.800H4.600V10L0 9.400zM5.300 5.800H11V10.900L5.300 10.100z" fill="#fff"/></svg><div class="a" style="left:32px;top:692.800px;width:229.200px;height:27.200px;background:#f3f3f3;overflow:hidden"><div style="position:absolute;left:0;top:26.300px;width:190px;height:1px;background:#cfcfcf"></div><svg style="left:168px;top:.2px" width="62" height="27" viewBox="0 0 62 27"><g filter="url(#b1)"><path d="M17.0 27.0L18.0 20.0L22.0 13.0L26.5 7.6L29.0 7.0L32.0 8.0L34.0 7.3L37.0 8.0L43.0 10.0L49.5 12.5L50.0 27.0z" fill="#dcaa5c"/><path d="M17 27l1.500-8 4-6.500 2 1.500-2.500 6-.5 7z" fill="#c8954a" opacity=".7"/><path d="M34 8l9 2.500 6.500 3V27H43c-1-7-4-13-9-19z" fill="#d29e52"/><path d="M26.0 27.0L26.0 19.0L27.5 13.0L30.0 10.3L32.0 10.5L34.5 14.0L36.5 19.0L38.5 24.0L39.0 27.0z" fill="#f1f1f1"/><path d="M26.500 21h11.500l1 3H26.200z" fill="#dbe3ea"/><path d="M13 27c2-2 6-3 10-2.500l3 2.500z" fill="#d8b88a"/><path d="M48.5 27.0L49.0 15.0L51.0 9.0L54.0 5.5L58.0 4.5L61.5 4.5L61.5 27.0z" fill="#a8935a"/><path d="M49 15c2-1 5-1 6 .500l-.5 2c-2-1-4-1-5.500 0zM49 21c2-1 5-1 6 .500l-.5 2c-2-1-4-1-5.500 0z" fill="#8c7a44"/><path d="M55 12c2-2.500 5-3 7-2.500V27h-7c-1-5-1-10 0-15z" fill="#b9aa78" opacity=".8"/><ellipse cx="36" cy="26.800" rx="5.500" ry="2" fill="#c9503a"/></g></svg></div><svg style="left:39.500px;top:701px" width="12" height="12" viewBox="0 0 12 12"><circle cx="7.300" cy="4.600" r="3.500" fill="none" stroke="#222" stroke-width="1"/><path d="M4.800 7.200L.8 11.300" stroke="#222" stroke-width="1.100"/></svg><span class="t" style="left:59.0px;top:699.8px;font-size:10.8px;line-height:14px;color:#333;transform:scaleX(0.891);">Type here to search</span><svg style="left:271.0px;top:698.5px" width="16" height="16" viewBox="0 0 16 16"><path d="M1 3.500h5l1.200 1.500H15v8.500H1z" fill="#f5c13c"/><path d="M1 6h14v8H1z" fill="#fbd75b"/><path d="M4.500 9.500h7V14h-7z" fill="#3f8fe0"/><path d="M4.500 9.500h7v1.500h-7z" fill="#2b6fc0"/></svg><svg style="left:303.0px;top:698.5px" width="16" height="16" viewBox="0 0 16 16"><path d="M5.500 4V2.800a2.500 2.500 0 0 1 5 0V4" fill="none" stroke="#1f8fe6" stroke-width="1.200"/><rect x="1.500" y="4" width="13" height="11" rx="1.800" fill="#f3f3f3"/><rect x="5" y="6.500" width="2.700" height="2.700" fill="#f25022"/><rect x="8.300" y="6.500" width="2.700" height="2.700" fill="#7fba00"/><rect x="5" y="9.800" width="2.700" height="2.700" fill="#00a4ef"/><rect x="8.300" y="9.800" width="2.700" height="2.700" fill="#ffb900"/></svg><svg style="left:336.0px;top:698.5px" width="16" height="16" viewBox="0 0 16 16"><rect x="6" y="2.500" width="9.500" height="11" fill="#d24726"/><path d="M9 5.500h5M9 8h5M9 10.500h5" stroke="#f5c9bd" stroke-width="1"/><path d="M.5 2.500L9.500 .8v14.400L.5 13.500z" fill="#c43e1c"/></svg><span class="t" style="left:338.3px;top:701.1px;font-size:8.5px;line-height:11px;color:#fff;font-weight:700;">P</span><svg style="left:369.0px;top:698.5px" width="16" height="16" viewBox="0 0 16 16"><circle cx="8" cy="8" r="7" fill="#1b7fd4"/><path d="M1.500 8.500c.5-5 5-7.500 9-6 3 1 4.500 3.500 4.400 6H8c0-2-3-2.500-4.500-.5-1 1.500-.5 4 1 5.500C2.500 12.500 1.300 10.500 1.500 8.500z" fill="#46d08a"/><path d="M8 8.500h6.900c-.2 2-1.500 3-3.500 3-2.500 0-3.500-1.500-3.400-3z" fill="#0c59a4"/><circle cx="4.500" cy="11.800" r="3.200" fill="#9a9a9a"/><circle cx="4.500" cy="10.800" r="1.100" fill="#e6e6e6"/><path d="M2.500 13.800c.3-1.300 1-1.800 2-1.800s1.700.5 2 1.800z" fill="#e6e6e6"/></svg><svg style="left:401.0px;top:698.5px" width="16" height="16" viewBox="0 0 16 16"><rect x="6" y="2.500" width="9.500" height="11" fill="#e8f2ec" stroke="#1e7145" stroke-width=".8"/><path d="M10.700 2.500v11M6 5.200h9.500M6 8h9.500M6 10.800h9.500" stroke="#1e7145" stroke-width=".7"/><path d="M.5 2.500L9.500 .8v14.400L.5 13.500z" fill="#1e7145"/></svg><span class="t" style="left:403.2px;top:701.1px;font-size:8.5px;line-height:11px;color:#fff;font-weight:700;">X</span><svg style="left:434.0px;top:698.5px" width="16" height="16" viewBox="0 0 16 16"><rect x="7" y="3.500" width="8.500" height="8.500" fill="#f4f8fc"/><path d="M7 3.500l4.250 4 4.250-4" fill="none" stroke="#0a64c0" stroke-width="1"/><rect x="7" y="3.500" width="8.500" height="8.500" fill="none" stroke="#0a64c0" stroke-width=".8"/><path d="M.5 2.500L9.500 .8v14.400L.5 13.500z" fill="#0a64c0"/><ellipse cx="5" cy="8" rx="2" ry="2.600" fill="none" stroke="#fff" stroke-width="1.300"/></svg><svg style="left:467.0px;top:698.5px" width="16" height="16" viewBox="0 0 16 16"><rect x="1" y="1.500" width="14" height="4.300" fill="#b3262b"/><rect x="1" y="5.800" width="14" height="4.300" fill="#3a7a34"/><rect x="1" y="10.100" width="14" height="4.300" fill="#3a4aa8"/><rect x="1" y="4.800" width="14" height="1" fill="#e8d84a"/><rect x="1" y="9.300" width="14" height="1" fill="#e8d84a"/><rect x="6" y="1" width="4" height="14" fill="#caa24a"/><rect x="6.500" y="6" width="3" height="4" fill="#6a4a1a"/></svg><svg style="left:499.0px;top:698.5px" width="16" height="16" viewBox="0 0 16 16"><circle cx="8" cy="8.500" r="6.800" fill="#ff9a1f"/><path d="M2 5c1.500-3 5-4.500 8-3.500-2 .5-3 2-3 3.500 2-1 5 0 5.500 3 .5 3-2 5-4.500 5s-5-2-5-5c0-1 .3-2 1-3z" fill="#ff4f3a"/><circle cx="8.200" cy="9" r="3.600" fill="#7a3cf0"/><path d="M11 1.500c2.500 1 4.200 3.800 4 7-1-2-2-3-4-3.500 0-1.500 0-2.500 0-3.500z" fill="#ffd23a"/></svg><div class="a" style="left:494.500px;top:718.300px;width:26px;height:1.700px;background:#f5d9a8"></div><svg style="left:532.0px;top:698.5px" width="16" height="16" viewBox="0 0 16 16"><rect x="6" y="2.500" width="9.500" height="11" fill="#f0f4fa" stroke="#2b579a" stroke-width=".8"/><path d="M10 5h4.500M10 7h4.500M10 9h4.500M10 11h4.500" stroke="#2b579a" stroke-width=".8"/><path d="M.5 2.500L9.500 .8v14.400L.5 13.500z" fill="#2b579a"/></svg><span class="t" style="left:533.2px;top:701.6px;font-size:8px;line-height:10px;color:#fff;font-weight:700;">W</span><svg style="left:565.0px;top:698.5px" width="16" height="16" viewBox="0 0 16 16"><rect x=".5" y=".5" width="15" height="15" rx="5" fill="#4a8cff"/><rect x="3.300" y="5.500" width="6.500" height="5" rx="1.200" fill="#fff"/><path d="M10.300 7.300l2.500-1.600v4.600l-2.500-1.600z" fill="#fff"/></svg><div class="a" style="left:590px;top:693px;width:30px;height:27px;background:#545e62"></div><div class="a" style="left:620px;top:693px;width:2.500px;height:27px;background:#464f54"></div><div class="a" style="left:590px;top:718.300px;width:32.500px;height:1.700px;background:#f5d9a8"></div><svg style="left:598.0px;top:698.5px" width="16" height="16" viewBox="0 0 16 16"><rect x="0" y="0" width="16" height="16" rx="6" fill="#0b5cff"/></svg><span class="t" style="left:600.3px;top:703.4px;font-size:4.4px;line-height:6px;color:#fff;font-weight:700;">zoom</span><svg style="left:1036px;top:698.500px" width="16" height="16" viewBox="0 0 16 16"><path d="M8 .3l1.800 2 2.600-.8.400 2.700 2.700.6-1 2.500 1.900 2-2.300 1.500.3 2.700-2.700.1-1.300 2.400L8 14.800l-2.400 1.200-1.300-2.400-2.700-.1.300-2.700L-.4 9.300l1.900-2-1-2.500 2.700-.6.400-2.700 2.600.8z" fill="#f5a623"/><circle cx="8" cy="8" r="5" fill="#f0801e"/></svg><span class="t" style="left:1040.6px;top:703.6px;font-size:4.6px;line-height:6px;color:#7a3a0a;font-weight:700;transform:scaleX(1.095);">UV</span><span class="t" style="left:1057.5px;top:699.6px;font-size:10.4px;line-height:14px;color:#fff;transform:scaleX(0.898);">UV sangat tinggi</span><svg style="left:1137.500px;top:703px" width="10" height="7" viewBox="0 0 10 7"><path d="M1 5.800L5 1.500l4 4.300" fill="none" stroke="#fff" stroke-width="1"/></svg><svg style="left:1153px;top:700.500px" width="10" height="12" viewBox="0 0 10 12"><rect x="1" y="2" width="6" height="8.500" rx="1.500" fill="none" stroke="#fff" stroke-width=".9"/><path d="M2.500 .8h3" stroke="#fff" stroke-width=".9"/><path d="M7 5l2.300-1v4.500L7 7.500" fill="none" stroke="#fff" stroke-width=".8"/><circle cx="4" cy="6" r="1" fill="#fff"/></svg><svg style="left:1167.500px;top:701px" width="13" height="11" viewBox="0 0 13 11"><rect x="3" y="1" width="9" height="6.500" fill="none" stroke="#fff" stroke-width=".9"/><path d="M6 9.800h4M1.500 .5v9.500M.3 2.500h2.400" stroke="#fff" stroke-width=".9"/><rect x=".5" y="6" width="3.500" height="4" fill="#2a373c" stroke="#fff" stroke-width=".7"/></svg><svg style="left:1183.500px;top:701px" width="12" height="11" viewBox="0 0 12 11"><path d="M.8 3.800h2l2.700-2.500v8.400L2.800 7.200h-2z" fill="none" stroke="#fff" stroke-width=".9"/><path d="M7.200 3.800c.8 1 .8 2.400 0 3.400" fill="none" stroke="#fff" stroke-width=".8"/><path d="M8.800 2.500c1.500 1.800 1.500 4.200 0 6M10.400 1.300c2 2.500 2 5.900 0 8.400" fill="none" stroke="#9aa0a3" stroke-width=".8"/></svg><span class="t" style="left:1212.3px;top:695.1px;font-size:8.3px;line-height:11px;color:#fff;transform:scaleX(0.852);">13.01</span><span class="t" style="left:1201.5px;top:706.9px;font-size:8.3px;line-height:11px;color:#fff;transform:scaleX(0.951);">26/01/2023</span><svg style="left:1252.500px;top:701px" width="11" height="11" viewBox="0 0 11 11"><path d="M.5 .5h10v7.500H6.500L5 10.300V8H.5z" fill="#fff"/><path d="M2.300 2.800h6.400M2.300 4.300h6.400M2.300 5.800h6.400" stroke="#2a373c" stroke-width=".7"/></svg></body></html>
